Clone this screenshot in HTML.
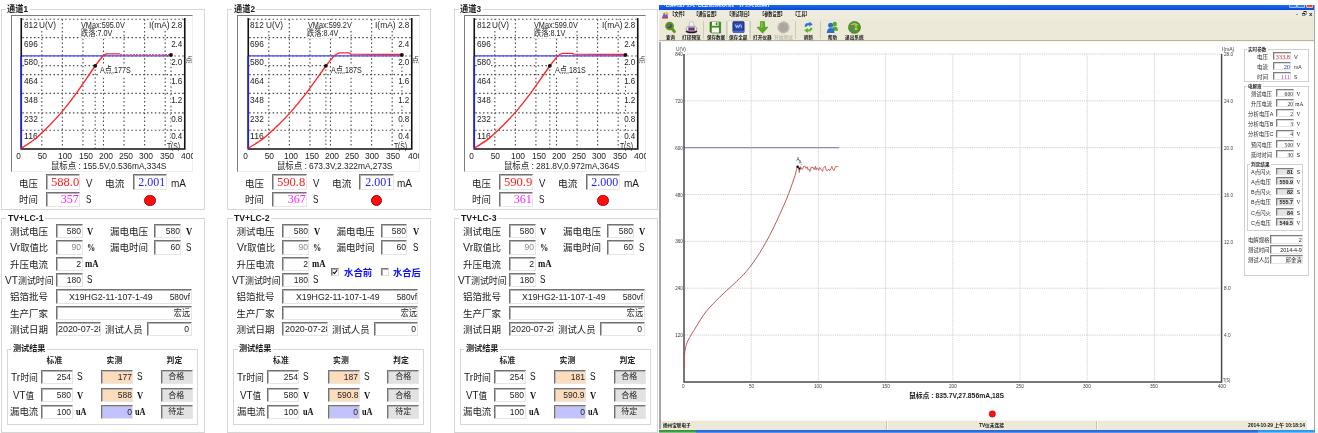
<!DOCTYPE html>
<html lang="zh-CN"><head><meta charset="utf-8"><title>TV+LC 测试</title>
<style>
html,body{margin:0;padding:0;background:#fff;}
body{width:1318px;height:433px;overflow:hidden;position:relative;font-family:'Liberation Sans','Noto Sans CJK SC',sans-serif;color:#1a1a1a;}
#root{position:absolute;left:0;top:0;width:1318px;height:433px;overflow:hidden;filter:blur(0.45px);}
#root div,#root svg{position:absolute;box-sizing:border-box;}
section{position:absolute;left:0;top:0;}
.t{white-space:nowrap;overflow:visible;}
.t span,.t b,.t label{display:inline-block;}
.inp{border:1px solid;border-color:#737373 #e6e6e6 #e6e6e6 #737373;box-shadow:inset 1px 1px 0 #b5b5b5;overflow:hidden;}
</style></head>
<body><div id="root">
<section id="ch1">
<div class="grp" style="left:0.7px;top:8.9px;width:204.2px;height:201.6px;border:1px solid #d6d6d6;"></div>
<div style="left:5.7px;top:3.9px;width:24px;height:11px;background:#fff;"></div>
<div class="t" style="top:2.7px;height:13px;line-height:13px;font-size:9.3px;left:7.2px;font-weight:bold;"><span style="transform:scaleX(0.884);transform-origin:0 50%;">通道1</span></div>
<div style="left:10.6px;top:15.2px;width:182.6px;height:157.2px;border:1.2px solid;border-color:#7c7c7c #eeeeee #eeeeee #7c7c7c;"></div>
<svg width="206" height="175" viewBox="0 0 206 175" style="left:0px;top:0;overflow:visible"><path d="M22.25,19.20H183.75 M22.25,37.60H183.75 M22.25,56.00H183.75 M22.25,74.60H183.75 M22.25,93.40H183.75 M22.25,112.90H183.75 M22.25,130.30H183.75 M41.81,19.20V148.40 M62.37,19.20V148.40 M82.93,19.20V148.40 M103.49,19.20V148.40 M124.05,19.20V148.40 M144.61,19.20V148.40 M165.17,19.20V148.40" stroke="#484848" stroke-width="1.1" stroke-dasharray="1.5 2.4" fill="none"/><path d="M22.25,65.60H95.20 M95.20,65.60V148.40 M171.00,55V148.40" stroke="#555" stroke-width="1.1" stroke-dasharray="1.5 2.4" fill="none"/></svg>
<div class="t" style="top:19.6px;height:9.8px;line-height:9.8px;font-size:9.6px;left:23.6px;color:#222;"><span style="background:#fff;transform:scaleX(0.862);transform-origin:0 50%;">812</span></div>
<div class="t" style="top:19.6px;height:9.8px;line-height:9.8px;font-size:9.6px;left:-57.6px;width:240px;text-align:right;color:#222;"><span style="background:#fff;transform:scaleX(0.839);transform-origin:100% 50%;">2.8</span></div>
<div class="t" style="top:38.7px;height:9.8px;line-height:9.8px;font-size:9.6px;left:23.6px;color:#222;"><span style="background:#fff;transform:scaleX(0.862);transform-origin:0 50%;">696</span></div>
<div class="t" style="top:38.7px;height:9.8px;line-height:9.8px;font-size:9.6px;left:-57.6px;width:240px;text-align:right;color:#222;"><span style="background:#fff;transform:scaleX(0.839);transform-origin:100% 50%;">2.4</span></div>
<div class="t" style="top:57.1px;height:9.8px;line-height:9.8px;font-size:9.6px;left:23.6px;color:#222;"><span style="background:#fff;transform:scaleX(0.862);transform-origin:0 50%;">580</span></div>
<div class="t" style="top:57.1px;height:9.8px;line-height:9.8px;font-size:9.6px;left:-57.6px;width:240px;text-align:right;color:#222;"><span style="background:#fff;transform:scaleX(0.839);transform-origin:100% 50%;">2.0</span></div>
<div class="t" style="top:75.7px;height:9.8px;line-height:9.8px;font-size:9.6px;left:23.6px;color:#222;"><span style="background:#fff;transform:scaleX(0.862);transform-origin:0 50%;">464</span></div>
<div class="t" style="top:75.7px;height:9.8px;line-height:9.8px;font-size:9.6px;left:-57.6px;width:240px;text-align:right;color:#222;"><span style="background:#fff;transform:scaleX(0.839);transform-origin:100% 50%;">1.6</span></div>
<div class="t" style="top:94.5px;height:9.8px;line-height:9.8px;font-size:9.6px;left:23.6px;color:#222;"><span style="background:#fff;transform:scaleX(0.862);transform-origin:0 50%;">348</span></div>
<div class="t" style="top:94.5px;height:9.8px;line-height:9.8px;font-size:9.6px;left:-57.6px;width:240px;text-align:right;color:#222;"><span style="background:#fff;transform:scaleX(0.839);transform-origin:100% 50%;">1.2</span></div>
<div class="t" style="top:114px;height:9.8px;line-height:9.8px;font-size:9.6px;left:23.6px;color:#222;"><span style="background:#fff;transform:scaleX(0.862);transform-origin:0 50%;">232</span></div>
<div class="t" style="top:114px;height:9.8px;line-height:9.8px;font-size:9.6px;left:-57.6px;width:240px;text-align:right;color:#222;"><span style="background:#fff;transform:scaleX(0.839);transform-origin:100% 50%;">0.8</span></div>
<div class="t" style="top:131.4px;height:9.8px;line-height:9.8px;font-size:9.6px;left:23.6px;color:#222;"><span style="background:#fff;transform:scaleX(0.902);transform-origin:0 50%;">116</span></div>
<div class="t" style="top:131.4px;height:9.8px;line-height:9.8px;font-size:9.6px;left:-57.6px;width:240px;text-align:right;color:#222;"><span style="background:#fff;transform:scaleX(0.839);transform-origin:100% 50%;">0.4</span></div>
<div class="t" style="top:19.6px;height:9.8px;line-height:9.8px;font-size:9.6px;left:39.4px;color:#222;"><span style="background:#fff;transform:scaleX(0.857);transform-origin:0 50%;">U(V)</span></div>
<div class="t" style="top:19.6px;height:9.8px;line-height:9.8px;font-size:9.6px;left:148.8px;color:#222;"><span style="background:#fff;transform:scaleX(0.878);transform-origin:0 50%;">I(mA)</span></div>
<div class="t" style="top:19.5px;height:9.8px;line-height:9.8px;font-size:9.6px;left:81.2px;color:#222;"><span style="background:#fff;transform:scaleX(0.760);transform-origin:0 50%;">VMax:595.0V</span></div>
<div class="t" style="top:28.8px;height:9.2px;line-height:9.2px;font-size:9px;left:80.6px;color:#222;"><span style="background:#fff;transform:scaleX(0.802);transform-origin:0 50%;">跌落:7.0V</span></div>
<div class="t" style="top:66.3px;height:9.2px;line-height:9.2px;font-size:9px;left:100.4px;color:#222;"><span style="background:#fff;transform:scaleX(0.797);transform-origin:0 50%;">A点,177S</span></div>
<div class="t" style="top:55.2px;height:10px;line-height:10px;font-size:7px;left:185.6px;color:#333;"><span style="">点</span></div>
<div class="t" style="top:142.2px;height:8.8px;line-height:8.8px;font-size:8.6px;left:167.3px;color:#222;"><span style="background:#fff;transform:scaleX(0.784);transform-origin:0 50%;">T(S)</span></div>
<svg width="206" height="175" viewBox="0 0 206 175" style="left:0px;top:0;overflow:visible"><path d="M21.25,55.8H171.50" stroke="#4545ff" stroke-width="1.35" fill="none"/><path d="M21.25,18V149.8 M184.75,18V149.8 M20.45,149H185.55" stroke="#111" stroke-width="1.6" fill="none"/><path d="M21.25,55.8V148.2" stroke="#2222dd" stroke-width="1.6" fill="none"/><path d="M21.3,148.2 C23.7,146.6 31.1,142.2 35.8,138.4 C40.5,134.6 45.2,129.7 49.6,125.2 C54.0,120.7 57.9,116.5 62.1,111.6 C66.3,106.7 69.1,103.3 74.6,95.7 C80.1,88.1 90.4,72.7 95.2,66.0 C100.0,59.3 101.9,57.4 103.2,55.7 L105.0,54.5 L106.9,53.8 H120.0" stroke="#ff2626" stroke-width="1.35" fill="none" stroke-linejoin="round"/><path d="M120.0,54.5 L171.0,54.7" stroke="#ff5050" stroke-width="1.2" stroke-dasharray="2.2 1" fill="none"/><circle cx="95.2" cy="65.8" r="1.9" fill="#111"/><circle cx="171.0" cy="54.9" r="1.9" fill="#111"/></svg>
<div class="t" style="top:149.1px;height:13px;line-height:13px;font-size:9.6px;left:-101.25px;width:240px;text-align:center;color:#222;"><span style="transform:scaleX(0.861);transform-origin:50% 50%;">0</span></div>
<div class="t" style="top:149.1px;height:13px;line-height:13px;font-size:9.6px;left:-77.5px;width:240px;text-align:center;color:#222;"><span style="transform:scaleX(0.881);transform-origin:50% 50%;">50</span></div>
<div class="t" style="top:149.1px;height:13px;line-height:13px;font-size:9.6px;left:-55px;width:240px;text-align:center;color:#222;"><span style="transform:scaleX(0.887);transform-origin:50% 50%;">100</span></div>
<div class="t" style="top:149.1px;height:13px;line-height:13px;font-size:9.6px;left:-34.4px;width:240px;text-align:center;color:#222;"><span style="transform:scaleX(0.887);transform-origin:50% 50%;">150</span></div>
<div class="t" style="top:149.1px;height:13px;line-height:13px;font-size:9.6px;left:-14px;width:240px;text-align:center;color:#222;"><span style="transform:scaleX(0.887);transform-origin:50% 50%;">200</span></div>
<div class="t" style="top:149.1px;height:13px;line-height:13px;font-size:9.6px;left:6px;width:240px;text-align:center;color:#222;"><span style="transform:scaleX(0.887);transform-origin:50% 50%;">250</span></div>
<div class="t" style="top:149.1px;height:13px;line-height:13px;font-size:9.6px;left:26px;width:240px;text-align:center;color:#222;"><span style="transform:scaleX(0.887);transform-origin:50% 50%;">300</span></div>
<div class="t" style="top:149.1px;height:13px;line-height:13px;font-size:9.6px;left:47px;width:240px;text-align:center;color:#222;"><span style="transform:scaleX(0.887);transform-origin:50% 50%;">350</span></div>
<div style="left:178px;top:150.5px;width:14.7px;height:12px;overflow:hidden;">
<div class="t" style="top:-1.4px;height:13px;line-height:13px;font-size:9.6px;left:3.2px;color:#222;"><span style="transform:scaleX(0.887);transform-origin:0 50%;">400</span></div>
</div>
<div class="t" style="top:160.1px;height:13px;line-height:13px;font-size:9.3px;left:50.6px;color:#222;"><span style="transform:scaleX(0.899);transform-origin:0 50%;">鼠标点 : 155.5V,0.536mA,334S</span></div>
<div class="t" style="top:177.1px;height:13px;line-height:13px;font-size:9.5px;left:18.7px;"><span style="transform:scaleX(0.989);transform-origin:0 50%;">电压</span></div>
<div class="inp" style="left:45.6px;top:174.4px;width:34.6px;height:15.4px;background:#fff;"></div>
<div class="t" style="top:174.1px;height:17px;line-height:17px;font-size:12.6px;left:-161px;width:240px;text-align:right;color:#ff1f1f;font-family:'Liberation Serif','Noto Serif CJK SC',serif;"><span style="transform:scaleX(1.002);transform-origin:100% 50%;">588.0</span></div>
<div class="t" style="top:176.6px;height:14px;line-height:14px;font-size:10.2px;left:86.2px;"><span style="transform:scaleX(0.942);transform-origin:0 50%;">V</span></div>
<div class="t" style="top:177.1px;height:13px;line-height:13px;font-size:9.5px;left:105px;"><span style="transform:scaleX(1.020);transform-origin:0 50%;">电流</span></div>
<div class="inp" style="left:132.5px;top:174.4px;width:34.7px;height:15.4px;background:#fff;"></div>
<div class="t" style="top:174.1px;height:17px;line-height:17px;font-size:12.6px;left:-74.2px;width:240px;text-align:right;color:#1f1fff;font-family:'Liberation Serif','Noto Serif CJK SC',serif;"><span style="transform:scaleX(0.953);transform-origin:100% 50%;">2.001</span></div>
<div class="t" style="top:176.6px;height:14px;line-height:14px;font-size:10.2px;left:170.6px;"><span style="transform:scaleX(0.982);transform-origin:0 50%;">mA</span></div>
<div class="t" style="top:193.3px;height:13px;line-height:13px;font-size:9.5px;left:18.7px;"><span style="transform:scaleX(0.989);transform-origin:0 50%;">时间</span></div>
<div class="inp" style="left:45.6px;top:192px;width:34.6px;height:14.6px;background:#fff;"></div>
<div class="t" style="top:190.9px;height:17px;line-height:17px;font-size:12.6px;left:-161.1px;width:240px;text-align:right;color:#ff22ff;font-family:'Liberation Serif','Noto Serif CJK SC',serif;"><span style="transform:scaleX(0.963);transform-origin:100% 50%;">357</span></div>
<div class="t" style="top:192.9px;height:14px;line-height:14px;font-size:10.2px;left:86px;"><span style="transform:scaleX(0.794);transform-origin:0 50%;">S</span></div>
<div style="left:144.1px;top:194.7px;width:11.8px;height:11.8px;border-radius:50%;background:#ff0d0d;border:0.8px solid #b30000;"></div>
<div class="grp" style="left:0.7px;top:217.5px;width:204.2px;height:215.4px;border:1px solid #d6d6d6;"></div>
<div style="left:6px;top:212.5px;width:38.5px;height:11px;background:#fff;"></div>
<div class="t" style="top:211.8px;height:12px;line-height:12px;font-size:8.6px;left:7.5px;font-weight:bold;"><span style="transform:scaleX(1.011);transform-origin:0 50%;">TV+LC-1</span></div>
<div class="t" style="top:224.8px;height:13px;line-height:13px;font-size:9.5px;left:10px;"><span style="transform:scaleX(1.000);transform-origin:0 50%;">测试电压</span></div>
<div class="inp" style="left:55.9px;top:223.8px;width:26.7px;height:14.4px;background:#fff;"></div>
<div class="t" style="top:225px;height:13px;line-height:13px;font-size:9px;left:-158.6px;width:240px;text-align:right;color:#222;"><span style="transform:scaleX(0.945);transform-origin:100% 50%;">580</span></div>
<div class="t" style="top:224.5px;height:14px;line-height:14px;font-size:10.2px;left:87px;color:#111;font-weight:bold;font-family:'Liberation Serif','Noto Serif CJK SC',serif;"><span style="transform:scaleX(0.842);transform-origin:0 50%;">V</span></div>
<div class="t" style="top:224.8px;height:13px;line-height:13px;font-size:9.5px;left:110px;"><span style="transform:scaleX(1.000);transform-origin:0 50%;">漏电电压</span></div>
<div class="inp" style="left:154.4px;top:223.8px;width:26.4px;height:14.4px;background:#fff;"></div>
<div class="t" style="top:225px;height:13px;line-height:13px;font-size:9px;left:-60.4px;width:240px;text-align:right;color:#222;"><span style="transform:scaleX(0.945);transform-origin:100% 50%;">580</span></div>
<div class="t" style="top:224.5px;height:14px;line-height:14px;font-size:10.2px;left:186.2px;color:#111;font-weight:bold;font-family:'Liberation Serif','Noto Serif CJK SC',serif;"><span style="transform:scaleX(0.842);transform-origin:0 50%;">V</span></div>
<div class="t" style="top:241.2px;height:13px;line-height:13px;font-size:9.5px;left:10px;"><span style="transform:scaleX(0.976);transform-origin:0 50%;"><span style="font-size:114%">Vr</span>取值比</span></div>
<div class="inp" style="left:55.9px;top:240.2px;width:26.7px;height:14.4px;background:#fff;"></div>
<div class="t" style="top:241.4px;height:13px;line-height:13px;font-size:9px;left:-158.6px;width:240px;text-align:right;color:#8c8c8c;"><span style="transform:scaleX(0.959);transform-origin:100% 50%;">90</span></div>
<div class="t" style="top:240.9px;height:14px;line-height:14px;font-size:10.2px;left:86.8px;color:#111;font-weight:bold;font-family:'Liberation Serif','Noto Serif CJK SC',serif;"><span style="transform:scaleX(0.805);transform-origin:0 50%;">%</span></div>
<div class="t" style="top:241.2px;height:13px;line-height:13px;font-size:9.5px;left:110px;"><span style="transform:scaleX(1.000);transform-origin:0 50%;">漏电时间</span></div>
<div class="inp" style="left:154.4px;top:240.2px;width:26.4px;height:14.4px;background:#fff;"></div>
<div class="t" style="top:241.4px;height:13px;line-height:13px;font-size:9px;left:-60.4px;width:240px;text-align:right;color:#222;"><span style="transform:scaleX(0.959);transform-origin:100% 50%;">60</span></div>
<div class="t" style="top:240.9px;height:14px;line-height:14px;font-size:10px;left:186.4px;color:#111;"><span style="transform:scaleX(0.809);transform-origin:0 50%;">S</span></div>
<div class="t" style="top:257.7px;height:13px;line-height:13px;font-size:9.5px;left:10px;"><span style="transform:scaleX(1.000);transform-origin:0 50%;">升压电流</span></div>
<div class="inp" style="left:55.9px;top:256.7px;width:26.7px;height:14.4px;background:#fff;"></div>
<div class="t" style="top:257.9px;height:13px;line-height:13px;font-size:9px;left:-158.6px;width:240px;text-align:right;color:#222;"><span style="transform:scaleX(0.957);transform-origin:100% 50%;">2</span></div>
<div class="t" style="top:257.4px;height:14px;line-height:14px;font-size:10.2px;left:85px;color:#111;font-weight:bold;font-family:'Liberation Serif','Noto Serif CJK SC',serif;"><span style="transform:scaleX(0.858);transform-origin:0 50%;">mA</span></div>
<div class="t" style="top:273.7px;height:13px;line-height:13px;font-size:9.5px;left:5px;"><span style="transform:scaleX(0.939);transform-origin:0 50%;"><span style="font-size:114%">VT</span>测试时间</span></div>
<div class="inp" style="left:55.9px;top:272.7px;width:26.7px;height:14.4px;background:#fff;"></div>
<div class="t" style="top:273.9px;height:13px;line-height:13px;font-size:9px;left:-158.6px;width:240px;text-align:right;color:#222;"><span style="transform:scaleX(0.945);transform-origin:100% 50%;">180</span></div>
<div class="t" style="top:273.4px;height:14px;line-height:14px;font-size:10px;left:86.6px;color:#111;"><span style="transform:scaleX(0.809);transform-origin:0 50%;">S</span></div>
<div class="t" style="top:290.3px;height:13px;line-height:13px;font-size:9.5px;left:10px;"><span style="transform:scaleX(1.000);transform-origin:0 50%;">铝箔批号</span></div>
<div class="inp" style="left:55.9px;top:289.3px;width:135.9px;height:14.4px;background:#fff;"></div>
<div class="t" style="top:290.5px;height:13px;line-height:13px;font-size:9px;left:69.4px;color:#222;"><span style="transform:scaleX(0.973);transform-origin:0 50%;">X19HG2-11-107-1-49</span></div>
<div class="t" style="top:290.5px;height:13px;line-height:13px;font-size:9px;left:-49.6px;width:240px;text-align:right;color:#222;"><span style="transform:scaleX(0.926);transform-origin:100% 50%;">580vf</span></div>
<div class="t" style="top:306.5px;height:13px;line-height:13px;font-size:9.5px;left:10px;"><span style="transform:scaleX(1.000);transform-origin:0 50%;">生产厂家</span></div>
<div class="inp" style="left:55.9px;top:305.5px;width:135.9px;height:14.4px;background:#fff;"></div>
<div class="t" style="top:306.7px;height:13px;line-height:13px;font-size:9px;left:-49.6px;width:240px;text-align:right;color:#222;"><span style="transform:scaleX(0.899);transform-origin:100% 50%;">宏远</span></div>
<div class="t" style="top:322.8px;height:13px;line-height:13px;font-size:9.5px;left:10px;"><span style="transform:scaleX(1.000);transform-origin:0 50%;">测试日期</span></div>
<div class="inp" style="left:55.9px;top:321.8px;width:45.2px;height:14.4px;background:#fff;">
<div class="t" style="top:0px;height:13px;line-height:13px;font-size:9px;left:1.6px;color:#222;"><span style="transform:scaleX(0.990);transform-origin:0 50%;">2020-07-28</span></div>
</div>
<div class="t" style="top:322.8px;height:13px;line-height:13px;font-size:9.5px;left:105px;"><span style="transform:scaleX(0.989);transform-origin:0 50%;">测试人员</span></div>
<div class="inp" style="left:147px;top:321.8px;width:44.8px;height:14.4px;background:#fff;"></div>
<div class="t" style="top:323px;height:13px;line-height:13px;font-size:9px;left:-50.8px;width:240px;text-align:right;color:#222;"><span style="transform:scaleX(0.957);transform-origin:100% 50%;">0</span></div>
<div class="grp" style="left:6.6px;top:348.8px;width:191.4px;height:76.6px;border:1px solid #d6d6d6;"></div>
<div style="left:11px;top:343.8px;width:35.5px;height:11px;background:#fff;"></div>
<div class="t" style="top:343.1px;height:12px;line-height:12px;font-size:8.2px;left:12.5px;font-weight:bold;"><span style="transform:scaleX(0.992);transform-origin:0 50%;">测试结果</span></div>
<div class="t" style="top:355.1px;height:11px;line-height:11px;font-size:7.8px;left:-65.6px;width:240px;text-align:center;color:#222;font-weight:bold;"><span style="transform:scaleX(1.000);transform-origin:50% 50%;">标准</span></div>
<div class="t" style="top:355.1px;height:11px;line-height:11px;font-size:7.8px;left:-5.6px;width:240px;text-align:center;color:#222;font-weight:bold;"><span style="transform:scaleX(1.000);transform-origin:50% 50%;">实测</span></div>
<div class="t" style="top:355.1px;height:11px;line-height:11px;font-size:7.8px;left:54.4px;width:240px;text-align:center;color:#222;font-weight:bold;"><span style="transform:scaleX(1.000);transform-origin:50% 50%;">判定</span></div>
<div class="t" style="top:370.7px;height:13px;line-height:13px;font-size:9.5px;left:10.6px;"><span style="transform:scaleX(0.933);transform-origin:0 50%;"><span style="font-size:114%">Tr</span>时间</span></div>
<div class="inp" style="left:40.6px;top:369.5px;width:32.1px;height:14.7px;background:#fff;"></div>
<div class="t" style="top:370.9px;height:13px;line-height:13px;font-size:9px;left:-168.6px;width:240px;text-align:right;color:#222;"><span style="transform:scaleX(0.945);transform-origin:100% 50%;">254</span></div>
<div class="t" style="top:370.4px;height:14px;line-height:14px;font-size:10px;left:76.8px;color:#111;"><span style="transform:scaleX(0.839);transform-origin:0 50%;">S</span></div>
<div class="inp" style="left:101px;top:369.5px;width:32px;height:14.7px;background:#fddcbc;"></div>
<div class="t" style="top:370.9px;height:13px;line-height:13px;font-size:9px;left:-108.4px;width:240px;text-align:right;color:#222;"><span style="transform:scaleX(0.948);transform-origin:100% 50%;">177</span></div>
<div class="t" style="top:370.4px;height:14px;line-height:14px;font-size:10px;left:137.2px;color:#111;"><span style="transform:scaleX(0.839);transform-origin:0 50%;">S</span></div>
<div class="inp" style="left:160.5px;top:369.5px;width:32.3px;height:14.7px;background:#e2e2e2;"></div>
<div class="t" style="top:371.3px;height:12px;line-height:12px;font-size:8.2px;left:56.6px;width:240px;text-align:center;color:#222;"><span style="transform:scaleX(0.976);transform-origin:50% 50%;">合格</span></div>
<div class="t" style="top:389.1px;height:13px;line-height:13px;font-size:9.5px;left:13px;"><span style="transform:scaleX(0.899);transform-origin:0 50%;"><span style="font-size:114%">VT</span>值</span></div>
<div class="inp" style="left:40.6px;top:387.8px;width:32.1px;height:14.6px;background:#fff;"></div>
<div class="t" style="top:389.3px;height:13px;line-height:13px;font-size:9px;left:-168.6px;width:240px;text-align:right;color:#222;"><span style="transform:scaleX(0.945);transform-origin:100% 50%;">580</span></div>
<div class="t" style="top:388.8px;height:14px;line-height:14px;font-size:10.2px;left:76.6px;color:#111;font-weight:bold;font-family:'Liberation Serif','Noto Serif CJK SC',serif;"><span style="transform:scaleX(0.842);transform-origin:0 50%;">V</span></div>
<div class="inp" style="left:101px;top:387.8px;width:32px;height:14.6px;background:#fddcbc;"></div>
<div class="t" style="top:389.3px;height:13px;line-height:13px;font-size:9px;left:-108.4px;width:240px;text-align:right;color:#222;"><span style="transform:scaleX(0.948);transform-origin:100% 50%;">588</span></div>
<div class="t" style="top:388.8px;height:14px;line-height:14px;font-size:10.2px;left:137px;color:#111;font-weight:bold;font-family:'Liberation Serif','Noto Serif CJK SC',serif;"><span style="transform:scaleX(0.842);transform-origin:0 50%;">V</span></div>
<div class="inp" style="left:160.5px;top:387.8px;width:32.3px;height:14.6px;background:#e2e2e2;"></div>
<div class="t" style="top:389.7px;height:12px;line-height:12px;font-size:8.2px;left:56.6px;width:240px;text-align:center;color:#222;"><span style="transform:scaleX(0.976);transform-origin:50% 50%;">合格</span></div>
<div class="t" style="top:405.4px;height:13px;line-height:13px;font-size:9.5px;left:10px;"><span style="transform:scaleX(0.989);transform-origin:0 50%;">漏电流</span></div>
<div class="inp" style="left:40.6px;top:404.6px;width:32.1px;height:14.6px;background:#fff;"></div>
<div class="t" style="top:405.6px;height:13px;line-height:13px;font-size:9px;left:-168.6px;width:240px;text-align:right;color:#222;"><span style="transform:scaleX(0.945);transform-origin:100% 50%;">100</span></div>
<div class="t" style="top:405.1px;height:14px;line-height:14px;font-size:10.2px;left:76px;color:#111;font-weight:bold;font-family:'Liberation Serif','Noto Serif CJK SC',serif;"><span style="transform:scaleX(0.813);transform-origin:0 50%;">uA</span></div>
<div class="inp" style="left:101px;top:404.6px;width:32px;height:14.6px;background:#c2c2ff;"></div>
<div class="t" style="top:405.6px;height:13px;line-height:13px;font-size:9px;left:-108.4px;width:240px;text-align:right;color:#222;"><span style="transform:scaleX(0.947);transform-origin:100% 50%;">0</span></div>
<div class="t" style="top:405.1px;height:14px;line-height:14px;font-size:10.2px;left:135.4px;color:#111;font-weight:bold;font-family:'Liberation Serif','Noto Serif CJK SC',serif;"><span style="transform:scaleX(0.813);transform-origin:0 50%;">uA</span></div>
<div class="inp" style="left:160.5px;top:404.6px;width:32.3px;height:14.6px;background:#e2e2e2;"></div>
<div class="t" style="top:406px;height:12px;line-height:12px;font-size:8.2px;left:56.6px;width:240px;text-align:center;color:#222;"><span style="transform:scaleX(0.976);transform-origin:50% 50%;">待定</span></div>
</section>
<section id="ch2">
<div class="grp" style="left:227.2px;top:8.9px;width:204.2px;height:201.6px;border:1px solid #d6d6d6;"></div>
<div style="left:232.2px;top:3.9px;width:24px;height:11px;background:#fff;"></div>
<div class="t" style="top:2.7px;height:13px;line-height:13px;font-size:9.3px;left:233.7px;font-weight:bold;"><span style="transform:scaleX(0.884);transform-origin:0 50%;">通道2</span></div>
<div style="left:237.1px;top:15.2px;width:182.6px;height:157.2px;border:1.2px solid;border-color:#7c7c7c #eeeeee #eeeeee #7c7c7c;"></div>
<svg width="206" height="175" viewBox="0 0 206 175" style="left:226.5px;top:0;overflow:visible"><path d="M22.25,19.20H183.75 M22.25,37.60H183.75 M22.25,56.00H183.75 M22.25,74.60H183.75 M22.25,93.40H183.75 M22.25,112.90H183.75 M22.25,130.30H183.75 M41.81,19.20V148.40 M62.37,19.20V148.40 M82.93,19.20V148.40 M103.49,19.20V148.40 M124.05,19.20V148.40 M144.61,19.20V148.40 M165.17,19.20V148.40" stroke="#484848" stroke-width="1.1" stroke-dasharray="1.5 2.4" fill="none"/><path d="M22.25,65.60H98.90 M98.90,65.60V148.40 M174.90,55V148.40" stroke="#555" stroke-width="1.1" stroke-dasharray="1.5 2.4" fill="none"/></svg>
<div class="t" style="top:19.6px;height:9.8px;line-height:9.8px;font-size:9.6px;left:250.1px;color:#222;"><span style="background:#fff;transform:scaleX(0.862);transform-origin:0 50%;">812</span></div>
<div class="t" style="top:19.6px;height:9.8px;line-height:9.8px;font-size:9.6px;left:168.9px;width:240px;text-align:right;color:#222;"><span style="background:#fff;transform:scaleX(0.839);transform-origin:100% 50%;">2.8</span></div>
<div class="t" style="top:38.7px;height:9.8px;line-height:9.8px;font-size:9.6px;left:250.1px;color:#222;"><span style="background:#fff;transform:scaleX(0.862);transform-origin:0 50%;">696</span></div>
<div class="t" style="top:38.7px;height:9.8px;line-height:9.8px;font-size:9.6px;left:168.9px;width:240px;text-align:right;color:#222;"><span style="background:#fff;transform:scaleX(0.839);transform-origin:100% 50%;">2.4</span></div>
<div class="t" style="top:57.1px;height:9.8px;line-height:9.8px;font-size:9.6px;left:250.1px;color:#222;"><span style="background:#fff;transform:scaleX(0.862);transform-origin:0 50%;">580</span></div>
<div class="t" style="top:57.1px;height:9.8px;line-height:9.8px;font-size:9.6px;left:168.9px;width:240px;text-align:right;color:#222;"><span style="background:#fff;transform:scaleX(0.839);transform-origin:100% 50%;">2.0</span></div>
<div class="t" style="top:75.7px;height:9.8px;line-height:9.8px;font-size:9.6px;left:250.1px;color:#222;"><span style="background:#fff;transform:scaleX(0.862);transform-origin:0 50%;">464</span></div>
<div class="t" style="top:75.7px;height:9.8px;line-height:9.8px;font-size:9.6px;left:168.9px;width:240px;text-align:right;color:#222;"><span style="background:#fff;transform:scaleX(0.839);transform-origin:100% 50%;">1.6</span></div>
<div class="t" style="top:94.5px;height:9.8px;line-height:9.8px;font-size:9.6px;left:250.1px;color:#222;"><span style="background:#fff;transform:scaleX(0.862);transform-origin:0 50%;">348</span></div>
<div class="t" style="top:94.5px;height:9.8px;line-height:9.8px;font-size:9.6px;left:168.9px;width:240px;text-align:right;color:#222;"><span style="background:#fff;transform:scaleX(0.839);transform-origin:100% 50%;">1.2</span></div>
<div class="t" style="top:114px;height:9.8px;line-height:9.8px;font-size:9.6px;left:250.1px;color:#222;"><span style="background:#fff;transform:scaleX(0.862);transform-origin:0 50%;">232</span></div>
<div class="t" style="top:114px;height:9.8px;line-height:9.8px;font-size:9.6px;left:168.9px;width:240px;text-align:right;color:#222;"><span style="background:#fff;transform:scaleX(0.839);transform-origin:100% 50%;">0.8</span></div>
<div class="t" style="top:131.4px;height:9.8px;line-height:9.8px;font-size:9.6px;left:250.1px;color:#222;"><span style="background:#fff;transform:scaleX(0.902);transform-origin:0 50%;">116</span></div>
<div class="t" style="top:131.4px;height:9.8px;line-height:9.8px;font-size:9.6px;left:168.9px;width:240px;text-align:right;color:#222;"><span style="background:#fff;transform:scaleX(0.839);transform-origin:100% 50%;">0.4</span></div>
<div class="t" style="top:19.6px;height:9.8px;line-height:9.8px;font-size:9.6px;left:265.9px;color:#222;"><span style="background:#fff;transform:scaleX(0.857);transform-origin:0 50%;">U(V)</span></div>
<div class="t" style="top:19.6px;height:9.8px;line-height:9.8px;font-size:9.6px;left:375.3px;color:#222;"><span style="background:#fff;transform:scaleX(0.878);transform-origin:0 50%;">I(mA)</span></div>
<div class="t" style="top:19.5px;height:9.8px;line-height:9.8px;font-size:9.6px;left:307.7px;color:#222;"><span style="background:#fff;transform:scaleX(0.760);transform-origin:0 50%;">VMax:599.2V</span></div>
<div class="t" style="top:28.8px;height:9.2px;line-height:9.2px;font-size:9px;left:307.1px;color:#222;"><span style="background:#fff;transform:scaleX(0.802);transform-origin:0 50%;">跌落:8.4V</span></div>
<div class="t" style="top:66.3px;height:9.2px;line-height:9.2px;font-size:9px;left:330.6px;color:#222;"><span style="background:#fff;transform:scaleX(0.797);transform-origin:0 50%;">A点,187S</span></div>
<div class="t" style="top:55.2px;height:10px;line-height:10px;font-size:7px;left:412.1px;color:#333;"><span style="">点</span></div>
<div class="t" style="top:142.2px;height:8.8px;line-height:8.8px;font-size:8.6px;left:393.8px;color:#222;"><span style="background:#fff;transform:scaleX(0.784);transform-origin:0 50%;">T(S)</span></div>
<svg width="206" height="175" viewBox="0 0 206 175" style="left:226.5px;top:0;overflow:visible"><path d="M21.25,55.8H175.40" stroke="#4545ff" stroke-width="1.35" fill="none"/><path d="M21.25,18V149.8 M184.75,18V149.8 M20.45,149H185.55" stroke="#111" stroke-width="1.6" fill="none"/><path d="M21.25,55.8V148.2" stroke="#2222dd" stroke-width="1.6" fill="none"/><path d="M21.3,148.2 C23.8,146.6 31.6,142.2 36.5,138.4 C41.5,134.6 46.4,129.7 51.0,125.2 C55.6,120.7 59.8,116.5 64.1,111.6 C68.5,106.7 71.5,103.3 77.3,95.7 C83.1,88.1 93.9,72.7 98.9,66.0 C103.9,59.3 105.9,57.4 107.3,55.7 L109.1,54.5 L112.2,52.9 H122.4 L124.0,54.2 L174.9,54.5" stroke="#ff2626" stroke-width="1.35" fill="none" stroke-linejoin="round"/><circle cx="98.9" cy="65.8" r="1.9" fill="#111"/><circle cx="174.9" cy="54.9" r="1.9" fill="#111"/></svg>
<div class="t" style="top:149.1px;height:13px;line-height:13px;font-size:9.6px;left:125.25px;width:240px;text-align:center;color:#222;"><span style="transform:scaleX(0.861);transform-origin:50% 50%;">0</span></div>
<div class="t" style="top:149.1px;height:13px;line-height:13px;font-size:9.6px;left:149px;width:240px;text-align:center;color:#222;"><span style="transform:scaleX(0.881);transform-origin:50% 50%;">50</span></div>
<div class="t" style="top:149.1px;height:13px;line-height:13px;font-size:9.6px;left:171.5px;width:240px;text-align:center;color:#222;"><span style="transform:scaleX(0.887);transform-origin:50% 50%;">100</span></div>
<div class="t" style="top:149.1px;height:13px;line-height:13px;font-size:9.6px;left:192.1px;width:240px;text-align:center;color:#222;"><span style="transform:scaleX(0.887);transform-origin:50% 50%;">150</span></div>
<div class="t" style="top:149.1px;height:13px;line-height:13px;font-size:9.6px;left:212.5px;width:240px;text-align:center;color:#222;"><span style="transform:scaleX(0.887);transform-origin:50% 50%;">200</span></div>
<div class="t" style="top:149.1px;height:13px;line-height:13px;font-size:9.6px;left:232.5px;width:240px;text-align:center;color:#222;"><span style="transform:scaleX(0.887);transform-origin:50% 50%;">250</span></div>
<div class="t" style="top:149.1px;height:13px;line-height:13px;font-size:9.6px;left:252.5px;width:240px;text-align:center;color:#222;"><span style="transform:scaleX(0.887);transform-origin:50% 50%;">300</span></div>
<div class="t" style="top:149.1px;height:13px;line-height:13px;font-size:9.6px;left:273.5px;width:240px;text-align:center;color:#222;"><span style="transform:scaleX(0.887);transform-origin:50% 50%;">350</span></div>
<div style="left:404.5px;top:150.5px;width:14.7px;height:12px;overflow:hidden;">
<div class="t" style="top:-1.4px;height:13px;line-height:13px;font-size:9.6px;left:3.2px;color:#222;"><span style="transform:scaleX(0.887);transform-origin:0 50%;">400</span></div>
</div>
<div class="t" style="top:160.1px;height:13px;line-height:13px;font-size:9.3px;left:277.1px;color:#222;"><span style="transform:scaleX(0.899);transform-origin:0 50%;">鼠标点 : 673.3V,2.322mA,273S</span></div>
<div class="t" style="top:177.1px;height:13px;line-height:13px;font-size:9.5px;left:245.2px;"><span style="transform:scaleX(0.989);transform-origin:0 50%;">电压</span></div>
<div class="inp" style="left:272.1px;top:174.4px;width:34.6px;height:15.4px;background:#fff;"></div>
<div class="t" style="top:174.1px;height:17px;line-height:17px;font-size:12.6px;left:65.5px;width:240px;text-align:right;color:#ff1f1f;font-family:'Liberation Serif','Noto Serif CJK SC',serif;"><span style="transform:scaleX(1.002);transform-origin:100% 50%;">590.8</span></div>
<div class="t" style="top:176.6px;height:14px;line-height:14px;font-size:10.2px;left:312.7px;"><span style="transform:scaleX(0.942);transform-origin:0 50%;">V</span></div>
<div class="t" style="top:177.1px;height:13px;line-height:13px;font-size:9.5px;left:331.5px;"><span style="transform:scaleX(1.020);transform-origin:0 50%;">电流</span></div>
<div class="inp" style="left:359px;top:174.4px;width:34.7px;height:15.4px;background:#fff;"></div>
<div class="t" style="top:174.1px;height:17px;line-height:17px;font-size:12.6px;left:152.3px;width:240px;text-align:right;color:#1f1fff;font-family:'Liberation Serif','Noto Serif CJK SC',serif;"><span style="transform:scaleX(0.953);transform-origin:100% 50%;">2.001</span></div>
<div class="t" style="top:176.6px;height:14px;line-height:14px;font-size:10.2px;left:397.1px;"><span style="transform:scaleX(0.982);transform-origin:0 50%;">mA</span></div>
<div class="t" style="top:193.3px;height:13px;line-height:13px;font-size:9.5px;left:245.2px;"><span style="transform:scaleX(0.989);transform-origin:0 50%;">时间</span></div>
<div class="inp" style="left:272.1px;top:192px;width:34.6px;height:14.6px;background:#fff;"></div>
<div class="t" style="top:190.9px;height:17px;line-height:17px;font-size:12.6px;left:65.4px;width:240px;text-align:right;color:#ff22ff;font-family:'Liberation Serif','Noto Serif CJK SC',serif;"><span style="transform:scaleX(0.963);transform-origin:100% 50%;">367</span></div>
<div class="t" style="top:192.9px;height:14px;line-height:14px;font-size:10.2px;left:312.5px;"><span style="transform:scaleX(0.794);transform-origin:0 50%;">S</span></div>
<div style="left:370.6px;top:194.7px;width:11.8px;height:11.8px;border-radius:50%;background:#ff0d0d;border:0.8px solid #b30000;"></div>
<div class="grp" style="left:227.2px;top:217.5px;width:204.2px;height:215.4px;border:1px solid #d6d6d6;"></div>
<div style="left:232.5px;top:212.5px;width:38.5px;height:11px;background:#fff;"></div>
<div class="t" style="top:211.8px;height:12px;line-height:12px;font-size:8.6px;left:234px;font-weight:bold;"><span style="transform:scaleX(1.011);transform-origin:0 50%;">TV+LC-2</span></div>
<div class="t" style="top:224.8px;height:13px;line-height:13px;font-size:9.5px;left:236.5px;"><span style="transform:scaleX(1.000);transform-origin:0 50%;">测试电压</span></div>
<div class="inp" style="left:282.4px;top:223.8px;width:26.7px;height:14.4px;background:#fff;"></div>
<div class="t" style="top:225px;height:13px;line-height:13px;font-size:9px;left:67.9px;width:240px;text-align:right;color:#222;"><span style="transform:scaleX(0.945);transform-origin:100% 50%;">580</span></div>
<div class="t" style="top:224.5px;height:14px;line-height:14px;font-size:10.2px;left:313.5px;color:#111;font-weight:bold;font-family:'Liberation Serif','Noto Serif CJK SC',serif;"><span style="transform:scaleX(0.842);transform-origin:0 50%;">V</span></div>
<div class="t" style="top:224.8px;height:13px;line-height:13px;font-size:9.5px;left:336.5px;"><span style="transform:scaleX(1.000);transform-origin:0 50%;">漏电电压</span></div>
<div class="inp" style="left:380.9px;top:223.8px;width:26.4px;height:14.4px;background:#fff;"></div>
<div class="t" style="top:225px;height:13px;line-height:13px;font-size:9px;left:166.1px;width:240px;text-align:right;color:#222;"><span style="transform:scaleX(0.945);transform-origin:100% 50%;">580</span></div>
<div class="t" style="top:224.5px;height:14px;line-height:14px;font-size:10.2px;left:412.7px;color:#111;font-weight:bold;font-family:'Liberation Serif','Noto Serif CJK SC',serif;"><span style="transform:scaleX(0.842);transform-origin:0 50%;">V</span></div>
<div class="t" style="top:241.2px;height:13px;line-height:13px;font-size:9.5px;left:236.5px;"><span style="transform:scaleX(0.976);transform-origin:0 50%;"><span style="font-size:114%">Vr</span>取值比</span></div>
<div class="inp" style="left:282.4px;top:240.2px;width:26.7px;height:14.4px;background:#fff;"></div>
<div class="t" style="top:241.4px;height:13px;line-height:13px;font-size:9px;left:67.9px;width:240px;text-align:right;color:#8c8c8c;"><span style="transform:scaleX(0.959);transform-origin:100% 50%;">90</span></div>
<div class="t" style="top:240.9px;height:14px;line-height:14px;font-size:10.2px;left:313.3px;color:#111;font-weight:bold;font-family:'Liberation Serif','Noto Serif CJK SC',serif;"><span style="transform:scaleX(0.805);transform-origin:0 50%;">%</span></div>
<div class="t" style="top:241.2px;height:13px;line-height:13px;font-size:9.5px;left:336.5px;"><span style="transform:scaleX(1.000);transform-origin:0 50%;">漏电时间</span></div>
<div class="inp" style="left:380.9px;top:240.2px;width:26.4px;height:14.4px;background:#fff;"></div>
<div class="t" style="top:241.4px;height:13px;line-height:13px;font-size:9px;left:166.1px;width:240px;text-align:right;color:#222;"><span style="transform:scaleX(0.959);transform-origin:100% 50%;">60</span></div>
<div class="t" style="top:240.9px;height:14px;line-height:14px;font-size:10px;left:412.9px;color:#111;"><span style="transform:scaleX(0.809);transform-origin:0 50%;">S</span></div>
<div class="t" style="top:257.7px;height:13px;line-height:13px;font-size:9.5px;left:236.5px;"><span style="transform:scaleX(1.000);transform-origin:0 50%;">升压电流</span></div>
<div class="inp" style="left:282.4px;top:256.7px;width:26.7px;height:14.4px;background:#fff;"></div>
<div class="t" style="top:257.9px;height:13px;line-height:13px;font-size:9px;left:67.9px;width:240px;text-align:right;color:#222;"><span style="transform:scaleX(0.957);transform-origin:100% 50%;">2</span></div>
<div class="t" style="top:257.4px;height:14px;line-height:14px;font-size:10.2px;left:311.5px;color:#111;font-weight:bold;font-family:'Liberation Serif','Noto Serif CJK SC',serif;"><span style="transform:scaleX(0.858);transform-origin:0 50%;">mA</span></div>
<div class="t" style="top:273.7px;height:13px;line-height:13px;font-size:9.5px;left:231.5px;"><span style="transform:scaleX(0.939);transform-origin:0 50%;"><span style="font-size:114%">VT</span>测试时间</span></div>
<div class="inp" style="left:282.4px;top:272.7px;width:26.7px;height:14.4px;background:#fff;"></div>
<div class="t" style="top:273.9px;height:13px;line-height:13px;font-size:9px;left:67.9px;width:240px;text-align:right;color:#222;"><span style="transform:scaleX(0.945);transform-origin:100% 50%;">180</span></div>
<div class="t" style="top:273.4px;height:14px;line-height:14px;font-size:10px;left:313.1px;color:#111;"><span style="transform:scaleX(0.809);transform-origin:0 50%;">S</span></div>
<div class="t" style="top:290.3px;height:13px;line-height:13px;font-size:9.5px;left:236.5px;"><span style="transform:scaleX(1.000);transform-origin:0 50%;">铝箔批号</span></div>
<div class="inp" style="left:282.4px;top:289.3px;width:135.9px;height:14.4px;background:#fff;"></div>
<div class="t" style="top:290.5px;height:13px;line-height:13px;font-size:9px;left:295.9px;color:#222;"><span style="transform:scaleX(0.973);transform-origin:0 50%;">X19HG2-11-107-1-49</span></div>
<div class="t" style="top:290.5px;height:13px;line-height:13px;font-size:9px;left:176.9px;width:240px;text-align:right;color:#222;"><span style="transform:scaleX(0.926);transform-origin:100% 50%;">580vf</span></div>
<div class="t" style="top:306.5px;height:13px;line-height:13px;font-size:9.5px;left:236.5px;"><span style="transform:scaleX(1.000);transform-origin:0 50%;">生产厂家</span></div>
<div class="inp" style="left:282.4px;top:305.5px;width:135.9px;height:14.4px;background:#fff;"></div>
<div class="t" style="top:306.7px;height:13px;line-height:13px;font-size:9px;left:176.9px;width:240px;text-align:right;color:#222;"><span style="transform:scaleX(0.899);transform-origin:100% 50%;">宏远</span></div>
<div class="t" style="top:322.8px;height:13px;line-height:13px;font-size:9.5px;left:236.5px;"><span style="transform:scaleX(1.000);transform-origin:0 50%;">测试日期</span></div>
<div class="inp" style="left:282.4px;top:321.8px;width:45.2px;height:14.4px;background:#fff;">
<div class="t" style="top:0px;height:13px;line-height:13px;font-size:9px;left:1.6px;color:#222;"><span style="transform:scaleX(0.990);transform-origin:0 50%;">2020-07-28</span></div>
</div>
<div class="t" style="top:322.8px;height:13px;line-height:13px;font-size:9.5px;left:331.5px;"><span style="transform:scaleX(0.989);transform-origin:0 50%;">测试人员</span></div>
<div class="inp" style="left:373.5px;top:321.8px;width:44.8px;height:14.4px;background:#fff;"></div>
<div class="t" style="top:323px;height:13px;line-height:13px;font-size:9px;left:175.7px;width:240px;text-align:right;color:#222;"><span style="transform:scaleX(0.957);transform-origin:100% 50%;">0</span></div>
<div style="left:330.9px;top:268.3px;width:8px;height:8px;background:#fff;border:1px solid;border-color:#7a7a7a #dcdcdc #dcdcdc #7a7a7a;box-shadow:inset 1px 1px 0 #b0b0b0;"></div>
<svg width="8" height="8" viewBox="0 0 8 8" style="left:330.9px;top:268.3px"><path d="M2,4 L3.4,5.6 L6.2,2.2" stroke="#111" stroke-width="1.1" fill="none"/></svg>
<div class="t" style="top:265.9px;height:13px;line-height:13px;font-size:9.4px;left:344.1px;color:#0a0aff;font-weight:bold;"><label style="transform:scaleX(1.006);transform-origin:0 50%;">水合前</label></div>
<div style="left:380.7px;top:268.3px;width:8px;height:8px;background:#fff;border:1px solid;border-color:#7a7a7a #dcdcdc #dcdcdc #7a7a7a;box-shadow:inset 1px 1px 0 #b0b0b0;"></div>
<div class="t" style="top:265.9px;height:13px;line-height:13px;font-size:9.4px;left:393.1px;color:#0a0aff;font-weight:bold;"><label style="transform:scaleX(0.984);transform-origin:0 50%;">水合后</label></div>
<div class="grp" style="left:233.1px;top:348.8px;width:191.4px;height:76.6px;border:1px solid #d6d6d6;"></div>
<div style="left:237.5px;top:343.8px;width:35.5px;height:11px;background:#fff;"></div>
<div class="t" style="top:343.1px;height:12px;line-height:12px;font-size:8.2px;left:239px;font-weight:bold;"><span style="transform:scaleX(0.992);transform-origin:0 50%;">测试结果</span></div>
<div class="t" style="top:355.1px;height:11px;line-height:11px;font-size:7.8px;left:160.9px;width:240px;text-align:center;color:#222;font-weight:bold;"><span style="transform:scaleX(1.000);transform-origin:50% 50%;">标准</span></div>
<div class="t" style="top:355.1px;height:11px;line-height:11px;font-size:7.8px;left:220.9px;width:240px;text-align:center;color:#222;font-weight:bold;"><span style="transform:scaleX(1.000);transform-origin:50% 50%;">实测</span></div>
<div class="t" style="top:355.1px;height:11px;line-height:11px;font-size:7.8px;left:280.9px;width:240px;text-align:center;color:#222;font-weight:bold;"><span style="transform:scaleX(1.000);transform-origin:50% 50%;">判定</span></div>
<div class="t" style="top:370.7px;height:13px;line-height:13px;font-size:9.5px;left:237.1px;"><span style="transform:scaleX(0.933);transform-origin:0 50%;"><span style="font-size:114%">Tr</span>时间</span></div>
<div class="inp" style="left:267.1px;top:369.5px;width:32.1px;height:14.7px;background:#fff;"></div>
<div class="t" style="top:370.9px;height:13px;line-height:13px;font-size:9px;left:57.9px;width:240px;text-align:right;color:#222;"><span style="transform:scaleX(0.945);transform-origin:100% 50%;">254</span></div>
<div class="t" style="top:370.4px;height:14px;line-height:14px;font-size:10px;left:303.3px;color:#111;"><span style="transform:scaleX(0.839);transform-origin:0 50%;">S</span></div>
<div class="inp" style="left:327.5px;top:369.5px;width:32px;height:14.7px;background:#fddcbc;"></div>
<div class="t" style="top:370.9px;height:13px;line-height:13px;font-size:9px;left:118.1px;width:240px;text-align:right;color:#222;"><span style="transform:scaleX(0.948);transform-origin:100% 50%;">187</span></div>
<div class="t" style="top:370.4px;height:14px;line-height:14px;font-size:10px;left:363.7px;color:#111;"><span style="transform:scaleX(0.839);transform-origin:0 50%;">S</span></div>
<div class="inp" style="left:387px;top:369.5px;width:32.3px;height:14.7px;background:#e2e2e2;"></div>
<div class="t" style="top:371.3px;height:12px;line-height:12px;font-size:8.2px;left:283.1px;width:240px;text-align:center;color:#222;"><span style="transform:scaleX(0.976);transform-origin:50% 50%;">合格</span></div>
<div class="t" style="top:389.1px;height:13px;line-height:13px;font-size:9.5px;left:239.5px;"><span style="transform:scaleX(0.899);transform-origin:0 50%;"><span style="font-size:114%">VT</span>值</span></div>
<div class="inp" style="left:267.1px;top:387.8px;width:32.1px;height:14.6px;background:#fff;"></div>
<div class="t" style="top:389.3px;height:13px;line-height:13px;font-size:9px;left:57.9px;width:240px;text-align:right;color:#222;"><span style="transform:scaleX(0.945);transform-origin:100% 50%;">580</span></div>
<div class="t" style="top:388.8px;height:14px;line-height:14px;font-size:10.2px;left:303.1px;color:#111;font-weight:bold;font-family:'Liberation Serif','Noto Serif CJK SC',serif;"><span style="transform:scaleX(0.842);transform-origin:0 50%;">V</span></div>
<div class="inp" style="left:327.5px;top:387.8px;width:32px;height:14.6px;background:#fddcbc;"></div>
<div class="t" style="top:389.3px;height:13px;line-height:13px;font-size:9px;left:118.1px;width:240px;text-align:right;color:#222;"><span style="transform:scaleX(0.948);transform-origin:100% 50%;">590.8</span></div>
<div class="t" style="top:388.8px;height:14px;line-height:14px;font-size:10.2px;left:363.5px;color:#111;font-weight:bold;font-family:'Liberation Serif','Noto Serif CJK SC',serif;"><span style="transform:scaleX(0.842);transform-origin:0 50%;">V</span></div>
<div class="inp" style="left:387px;top:387.8px;width:32.3px;height:14.6px;background:#e2e2e2;"></div>
<div class="t" style="top:389.7px;height:12px;line-height:12px;font-size:8.2px;left:283.1px;width:240px;text-align:center;color:#222;"><span style="transform:scaleX(0.976);transform-origin:50% 50%;">合格</span></div>
<div class="t" style="top:405.4px;height:13px;line-height:13px;font-size:9.5px;left:236.5px;"><span style="transform:scaleX(0.989);transform-origin:0 50%;">漏电流</span></div>
<div class="inp" style="left:267.1px;top:404.6px;width:32.1px;height:14.6px;background:#fff;"></div>
<div class="t" style="top:405.6px;height:13px;line-height:13px;font-size:9px;left:57.9px;width:240px;text-align:right;color:#222;"><span style="transform:scaleX(0.945);transform-origin:100% 50%;">100</span></div>
<div class="t" style="top:405.1px;height:14px;line-height:14px;font-size:10.2px;left:302.5px;color:#111;font-weight:bold;font-family:'Liberation Serif','Noto Serif CJK SC',serif;"><span style="transform:scaleX(0.813);transform-origin:0 50%;">uA</span></div>
<div class="inp" style="left:327.5px;top:404.6px;width:32px;height:14.6px;background:#c2c2ff;"></div>
<div class="t" style="top:405.6px;height:13px;line-height:13px;font-size:9px;left:118.1px;width:240px;text-align:right;color:#222;"><span style="transform:scaleX(0.947);transform-origin:100% 50%;">0</span></div>
<div class="t" style="top:405.1px;height:14px;line-height:14px;font-size:10.2px;left:361.9px;color:#111;font-weight:bold;font-family:'Liberation Serif','Noto Serif CJK SC',serif;"><span style="transform:scaleX(0.813);transform-origin:0 50%;">uA</span></div>
<div class="inp" style="left:387px;top:404.6px;width:32.3px;height:14.6px;background:#e2e2e2;"></div>
<div class="t" style="top:406px;height:12px;line-height:12px;font-size:8.2px;left:283.1px;width:240px;text-align:center;color:#222;"><span style="transform:scaleX(0.976);transform-origin:50% 50%;">待定</span></div>
</section>
<section id="ch3">
<div class="grp" style="left:453.7px;top:8.9px;width:204.2px;height:201.6px;border:1px solid #d6d6d6;"></div>
<div style="left:458.7px;top:3.9px;width:24px;height:11px;background:#fff;"></div>
<div class="t" style="top:2.7px;height:13px;line-height:13px;font-size:9.3px;left:460.2px;font-weight:bold;"><span style="transform:scaleX(0.884);transform-origin:0 50%;">通道3</span></div>
<div style="left:463.6px;top:15.2px;width:182.6px;height:157.2px;border:1.2px solid;border-color:#7c7c7c #eeeeee #eeeeee #7c7c7c;"></div>
<svg width="206" height="175" viewBox="0 0 206 175" style="left:453px;top:0;overflow:visible"><path d="M22.25,19.20H183.75 M22.25,37.60H183.75 M22.25,56.00H183.75 M22.25,74.60H183.75 M22.25,93.40H183.75 M22.25,112.90H183.75 M22.25,130.30H183.75 M41.81,19.20V148.40 M62.37,19.20V148.40 M82.93,19.20V148.40 M103.49,19.20V148.40 M124.05,19.20V148.40 M144.61,19.20V148.40 M165.17,19.20V148.40" stroke="#484848" stroke-width="1.1" stroke-dasharray="1.5 2.4" fill="none"/><path d="M22.25,65.60H96.80 M96.80,65.60V148.40 M172.50,55V148.40" stroke="#555" stroke-width="1.1" stroke-dasharray="1.5 2.4" fill="none"/></svg>
<div class="t" style="top:19.6px;height:9.8px;line-height:9.8px;font-size:9.6px;left:476.6px;color:#222;"><span style="background:#fff;transform:scaleX(0.862);transform-origin:0 50%;">812</span></div>
<div class="t" style="top:19.6px;height:9.8px;line-height:9.8px;font-size:9.6px;left:395.4px;width:240px;text-align:right;color:#222;"><span style="background:#fff;transform:scaleX(0.839);transform-origin:100% 50%;">2.8</span></div>
<div class="t" style="top:38.7px;height:9.8px;line-height:9.8px;font-size:9.6px;left:476.6px;color:#222;"><span style="background:#fff;transform:scaleX(0.862);transform-origin:0 50%;">696</span></div>
<div class="t" style="top:38.7px;height:9.8px;line-height:9.8px;font-size:9.6px;left:395.4px;width:240px;text-align:right;color:#222;"><span style="background:#fff;transform:scaleX(0.839);transform-origin:100% 50%;">2.4</span></div>
<div class="t" style="top:57.1px;height:9.8px;line-height:9.8px;font-size:9.6px;left:476.6px;color:#222;"><span style="background:#fff;transform:scaleX(0.862);transform-origin:0 50%;">580</span></div>
<div class="t" style="top:57.1px;height:9.8px;line-height:9.8px;font-size:9.6px;left:395.4px;width:240px;text-align:right;color:#222;"><span style="background:#fff;transform:scaleX(0.839);transform-origin:100% 50%;">2.0</span></div>
<div class="t" style="top:75.7px;height:9.8px;line-height:9.8px;font-size:9.6px;left:476.6px;color:#222;"><span style="background:#fff;transform:scaleX(0.862);transform-origin:0 50%;">464</span></div>
<div class="t" style="top:75.7px;height:9.8px;line-height:9.8px;font-size:9.6px;left:395.4px;width:240px;text-align:right;color:#222;"><span style="background:#fff;transform:scaleX(0.839);transform-origin:100% 50%;">1.6</span></div>
<div class="t" style="top:94.5px;height:9.8px;line-height:9.8px;font-size:9.6px;left:476.6px;color:#222;"><span style="background:#fff;transform:scaleX(0.862);transform-origin:0 50%;">348</span></div>
<div class="t" style="top:94.5px;height:9.8px;line-height:9.8px;font-size:9.6px;left:395.4px;width:240px;text-align:right;color:#222;"><span style="background:#fff;transform:scaleX(0.839);transform-origin:100% 50%;">1.2</span></div>
<div class="t" style="top:114px;height:9.8px;line-height:9.8px;font-size:9.6px;left:476.6px;color:#222;"><span style="background:#fff;transform:scaleX(0.862);transform-origin:0 50%;">232</span></div>
<div class="t" style="top:114px;height:9.8px;line-height:9.8px;font-size:9.6px;left:395.4px;width:240px;text-align:right;color:#222;"><span style="background:#fff;transform:scaleX(0.839);transform-origin:100% 50%;">0.8</span></div>
<div class="t" style="top:131.4px;height:9.8px;line-height:9.8px;font-size:9.6px;left:476.6px;color:#222;"><span style="background:#fff;transform:scaleX(0.902);transform-origin:0 50%;">116</span></div>
<div class="t" style="top:131.4px;height:9.8px;line-height:9.8px;font-size:9.6px;left:395.4px;width:240px;text-align:right;color:#222;"><span style="background:#fff;transform:scaleX(0.839);transform-origin:100% 50%;">0.4</span></div>
<div class="t" style="top:19.6px;height:9.8px;line-height:9.8px;font-size:9.6px;left:492.4px;color:#222;"><span style="background:#fff;transform:scaleX(0.857);transform-origin:0 50%;">U(V)</span></div>
<div class="t" style="top:19.6px;height:9.8px;line-height:9.8px;font-size:9.6px;left:601.8px;color:#222;"><span style="background:#fff;transform:scaleX(0.878);transform-origin:0 50%;">I(mA)</span></div>
<div class="t" style="top:19.5px;height:9.8px;line-height:9.8px;font-size:9.6px;left:534.2px;color:#222;"><span style="background:#fff;transform:scaleX(0.760);transform-origin:0 50%;">VMax:599.0V</span></div>
<div class="t" style="top:28.8px;height:9.2px;line-height:9.2px;font-size:9px;left:533.6px;color:#222;"><span style="background:#fff;transform:scaleX(0.802);transform-origin:0 50%;">跌落:8.1V</span></div>
<div class="t" style="top:66.3px;height:9.2px;line-height:9.2px;font-size:9px;left:555px;color:#222;"><span style="background:#fff;transform:scaleX(0.797);transform-origin:0 50%;">A点,181S</span></div>
<div class="t" style="top:55.2px;height:10px;line-height:10px;font-size:7px;left:638.6px;color:#333;"><span style="">点</span></div>
<div class="t" style="top:142.2px;height:8.8px;line-height:8.8px;font-size:8.6px;left:620.3px;color:#222;"><span style="background:#fff;transform:scaleX(0.784);transform-origin:0 50%;">T(S)</span></div>
<svg width="206" height="175" viewBox="0 0 206 175" style="left:453px;top:0;overflow:visible"><path d="M21.25,55.8H173.00" stroke="#4545ff" stroke-width="1.35" fill="none"/><path d="M21.25,18V149.8 M184.75,18V149.8 M20.45,149H185.55" stroke="#111" stroke-width="1.6" fill="none"/><path d="M21.25,55.8V148.2" stroke="#2222dd" stroke-width="1.6" fill="none"/><path d="M21.3,148.2 C23.8,146.6 31.3,142.2 36.1,138.4 C40.9,134.6 45.7,129.7 50.2,125.2 C54.7,120.7 58.7,116.5 63.0,111.6 C67.2,106.7 70.1,103.3 75.8,95.7 C81.4,88.1 91.9,72.7 96.8,66.0 C101.7,59.3 103.6,57.4 105.0,55.7 L106.8,54.5 L109.2,53.3 H119.0 L120.6,54.2 L172.5,54.5" stroke="#ff2626" stroke-width="1.35" fill="none" stroke-linejoin="round"/><circle cx="96.8" cy="65.8" r="1.9" fill="#111"/><circle cx="172.5" cy="54.9" r="1.9" fill="#111"/></svg>
<div class="t" style="top:149.1px;height:13px;line-height:13px;font-size:9.6px;left:351.75px;width:240px;text-align:center;color:#222;"><span style="transform:scaleX(0.861);transform-origin:50% 50%;">0</span></div>
<div class="t" style="top:149.1px;height:13px;line-height:13px;font-size:9.6px;left:375.5px;width:240px;text-align:center;color:#222;"><span style="transform:scaleX(0.881);transform-origin:50% 50%;">50</span></div>
<div class="t" style="top:149.1px;height:13px;line-height:13px;font-size:9.6px;left:398px;width:240px;text-align:center;color:#222;"><span style="transform:scaleX(0.887);transform-origin:50% 50%;">100</span></div>
<div class="t" style="top:149.1px;height:13px;line-height:13px;font-size:9.6px;left:418.6px;width:240px;text-align:center;color:#222;"><span style="transform:scaleX(0.887);transform-origin:50% 50%;">150</span></div>
<div class="t" style="top:149.1px;height:13px;line-height:13px;font-size:9.6px;left:439px;width:240px;text-align:center;color:#222;"><span style="transform:scaleX(0.887);transform-origin:50% 50%;">200</span></div>
<div class="t" style="top:149.1px;height:13px;line-height:13px;font-size:9.6px;left:459px;width:240px;text-align:center;color:#222;"><span style="transform:scaleX(0.887);transform-origin:50% 50%;">250</span></div>
<div class="t" style="top:149.1px;height:13px;line-height:13px;font-size:9.6px;left:479px;width:240px;text-align:center;color:#222;"><span style="transform:scaleX(0.887);transform-origin:50% 50%;">300</span></div>
<div class="t" style="top:149.1px;height:13px;line-height:13px;font-size:9.6px;left:500px;width:240px;text-align:center;color:#222;"><span style="transform:scaleX(0.887);transform-origin:50% 50%;">350</span></div>
<div style="left:631px;top:150.5px;width:14.7px;height:12px;overflow:hidden;">
<div class="t" style="top:-1.4px;height:13px;line-height:13px;font-size:9.6px;left:3.2px;color:#222;"><span style="transform:scaleX(0.887);transform-origin:0 50%;">400</span></div>
</div>
<div class="t" style="top:160.1px;height:13px;line-height:13px;font-size:9.3px;left:503.6px;color:#222;"><span style="transform:scaleX(0.899);transform-origin:0 50%;">鼠标点 : 281.8V,0.972mA,364S</span></div>
<div class="t" style="top:177.1px;height:13px;line-height:13px;font-size:9.5px;left:471.7px;"><span style="transform:scaleX(0.989);transform-origin:0 50%;">电压</span></div>
<div class="inp" style="left:498.6px;top:174.4px;width:34.6px;height:15.4px;background:#fff;"></div>
<div class="t" style="top:174.1px;height:17px;line-height:17px;font-size:12.6px;left:292px;width:240px;text-align:right;color:#ff1f1f;font-family:'Liberation Serif','Noto Serif CJK SC',serif;"><span style="transform:scaleX(1.002);transform-origin:100% 50%;">590.9</span></div>
<div class="t" style="top:176.6px;height:14px;line-height:14px;font-size:10.2px;left:539.2px;"><span style="transform:scaleX(0.942);transform-origin:0 50%;">V</span></div>
<div class="t" style="top:177.1px;height:13px;line-height:13px;font-size:9.5px;left:558px;"><span style="transform:scaleX(1.020);transform-origin:0 50%;">电流</span></div>
<div class="inp" style="left:585.5px;top:174.4px;width:34.7px;height:15.4px;background:#fff;"></div>
<div class="t" style="top:174.1px;height:17px;line-height:17px;font-size:12.6px;left:378.8px;width:240px;text-align:right;color:#1f1fff;font-family:'Liberation Serif','Noto Serif CJK SC',serif;"><span style="transform:scaleX(0.953);transform-origin:100% 50%;">2.000</span></div>
<div class="t" style="top:176.6px;height:14px;line-height:14px;font-size:10.2px;left:623.6px;"><span style="transform:scaleX(0.982);transform-origin:0 50%;">mA</span></div>
<div class="t" style="top:193.3px;height:13px;line-height:13px;font-size:9.5px;left:471.7px;"><span style="transform:scaleX(0.989);transform-origin:0 50%;">时间</span></div>
<div class="inp" style="left:498.6px;top:192px;width:34.6px;height:14.6px;background:#fff;"></div>
<div class="t" style="top:190.9px;height:17px;line-height:17px;font-size:12.6px;left:291.9px;width:240px;text-align:right;color:#ff22ff;font-family:'Liberation Serif','Noto Serif CJK SC',serif;"><span style="transform:scaleX(0.963);transform-origin:100% 50%;">361</span></div>
<div class="t" style="top:192.9px;height:14px;line-height:14px;font-size:10.2px;left:539px;"><span style="transform:scaleX(0.794);transform-origin:0 50%;">S</span></div>
<div style="left:597.1px;top:194.7px;width:11.8px;height:11.8px;border-radius:50%;background:#ff0d0d;border:0.8px solid #b30000;"></div>
<div class="grp" style="left:453.7px;top:217.5px;width:204.2px;height:215.4px;border:1px solid #d6d6d6;"></div>
<div style="left:459px;top:212.5px;width:38.5px;height:11px;background:#fff;"></div>
<div class="t" style="top:211.8px;height:12px;line-height:12px;font-size:8.6px;left:460.5px;font-weight:bold;"><span style="transform:scaleX(1.011);transform-origin:0 50%;">TV+LC-3</span></div>
<div class="t" style="top:224.8px;height:13px;line-height:13px;font-size:9.5px;left:463px;"><span style="transform:scaleX(1.000);transform-origin:0 50%;">测试电压</span></div>
<div class="inp" style="left:508.9px;top:223.8px;width:26.7px;height:14.4px;background:#fff;"></div>
<div class="t" style="top:225px;height:13px;line-height:13px;font-size:9px;left:294.4px;width:240px;text-align:right;color:#222;"><span style="transform:scaleX(0.945);transform-origin:100% 50%;">580</span></div>
<div class="t" style="top:224.5px;height:14px;line-height:14px;font-size:10.2px;left:540px;color:#111;font-weight:bold;font-family:'Liberation Serif','Noto Serif CJK SC',serif;"><span style="transform:scaleX(0.842);transform-origin:0 50%;">V</span></div>
<div class="t" style="top:224.8px;height:13px;line-height:13px;font-size:9.5px;left:563px;"><span style="transform:scaleX(1.000);transform-origin:0 50%;">漏电电压</span></div>
<div class="inp" style="left:607.4px;top:223.8px;width:26.4px;height:14.4px;background:#fff;"></div>
<div class="t" style="top:225px;height:13px;line-height:13px;font-size:9px;left:392.6px;width:240px;text-align:right;color:#222;"><span style="transform:scaleX(0.945);transform-origin:100% 50%;">580</span></div>
<div class="t" style="top:224.5px;height:14px;line-height:14px;font-size:10.2px;left:639.2px;color:#111;font-weight:bold;font-family:'Liberation Serif','Noto Serif CJK SC',serif;"><span style="transform:scaleX(0.842);transform-origin:0 50%;">V</span></div>
<div class="t" style="top:241.2px;height:13px;line-height:13px;font-size:9.5px;left:463px;"><span style="transform:scaleX(0.976);transform-origin:0 50%;"><span style="font-size:114%">Vr</span>取值比</span></div>
<div class="inp" style="left:508.9px;top:240.2px;width:26.7px;height:14.4px;background:#fff;"></div>
<div class="t" style="top:241.4px;height:13px;line-height:13px;font-size:9px;left:294.4px;width:240px;text-align:right;color:#8c8c8c;"><span style="transform:scaleX(0.959);transform-origin:100% 50%;">90</span></div>
<div class="t" style="top:240.9px;height:14px;line-height:14px;font-size:10.2px;left:539.8px;color:#111;font-weight:bold;font-family:'Liberation Serif','Noto Serif CJK SC',serif;"><span style="transform:scaleX(0.805);transform-origin:0 50%;">%</span></div>
<div class="t" style="top:241.2px;height:13px;line-height:13px;font-size:9.5px;left:563px;"><span style="transform:scaleX(1.000);transform-origin:0 50%;">漏电时间</span></div>
<div class="inp" style="left:607.4px;top:240.2px;width:26.4px;height:14.4px;background:#fff;"></div>
<div class="t" style="top:241.4px;height:13px;line-height:13px;font-size:9px;left:392.6px;width:240px;text-align:right;color:#222;"><span style="transform:scaleX(0.959);transform-origin:100% 50%;">60</span></div>
<div class="t" style="top:240.9px;height:14px;line-height:14px;font-size:10px;left:639.4px;color:#111;"><span style="transform:scaleX(0.809);transform-origin:0 50%;">S</span></div>
<div class="t" style="top:257.7px;height:13px;line-height:13px;font-size:9.5px;left:463px;"><span style="transform:scaleX(1.000);transform-origin:0 50%;">升压电流</span></div>
<div class="inp" style="left:508.9px;top:256.7px;width:26.7px;height:14.4px;background:#fff;"></div>
<div class="t" style="top:257.9px;height:13px;line-height:13px;font-size:9px;left:294.4px;width:240px;text-align:right;color:#222;"><span style="transform:scaleX(0.957);transform-origin:100% 50%;">2</span></div>
<div class="t" style="top:257.4px;height:14px;line-height:14px;font-size:10.2px;left:538px;color:#111;font-weight:bold;font-family:'Liberation Serif','Noto Serif CJK SC',serif;"><span style="transform:scaleX(0.858);transform-origin:0 50%;">mA</span></div>
<div class="t" style="top:273.7px;height:13px;line-height:13px;font-size:9.5px;left:458px;"><span style="transform:scaleX(0.939);transform-origin:0 50%;"><span style="font-size:114%">VT</span>测试时间</span></div>
<div class="inp" style="left:508.9px;top:272.7px;width:26.7px;height:14.4px;background:#fff;"></div>
<div class="t" style="top:273.9px;height:13px;line-height:13px;font-size:9px;left:294.4px;width:240px;text-align:right;color:#222;"><span style="transform:scaleX(0.945);transform-origin:100% 50%;">180</span></div>
<div class="t" style="top:273.4px;height:14px;line-height:14px;font-size:10px;left:539.6px;color:#111;"><span style="transform:scaleX(0.809);transform-origin:0 50%;">S</span></div>
<div class="t" style="top:290.3px;height:13px;line-height:13px;font-size:9.5px;left:463px;"><span style="transform:scaleX(1.000);transform-origin:0 50%;">铝箔批号</span></div>
<div class="inp" style="left:508.9px;top:289.3px;width:135.9px;height:14.4px;background:#fff;"></div>
<div class="t" style="top:290.5px;height:13px;line-height:13px;font-size:9px;left:522.4px;color:#222;"><span style="transform:scaleX(0.973);transform-origin:0 50%;">X19HG2-11-107-1-49</span></div>
<div class="t" style="top:290.5px;height:13px;line-height:13px;font-size:9px;left:403.4px;width:240px;text-align:right;color:#222;"><span style="transform:scaleX(0.926);transform-origin:100% 50%;">580vf</span></div>
<div class="t" style="top:306.5px;height:13px;line-height:13px;font-size:9.5px;left:463px;"><span style="transform:scaleX(1.000);transform-origin:0 50%;">生产厂家</span></div>
<div class="inp" style="left:508.9px;top:305.5px;width:135.9px;height:14.4px;background:#fff;"></div>
<div class="t" style="top:306.7px;height:13px;line-height:13px;font-size:9px;left:403.4px;width:240px;text-align:right;color:#222;"><span style="transform:scaleX(0.899);transform-origin:100% 50%;">宏远</span></div>
<div class="t" style="top:322.8px;height:13px;line-height:13px;font-size:9.5px;left:463px;"><span style="transform:scaleX(1.000);transform-origin:0 50%;">测试日期</span></div>
<div class="inp" style="left:508.9px;top:321.8px;width:45.2px;height:14.4px;background:#fff;">
<div class="t" style="top:0px;height:13px;line-height:13px;font-size:9px;left:1.6px;color:#222;"><span style="transform:scaleX(0.990);transform-origin:0 50%;">2020-07-28</span></div>
</div>
<div class="t" style="top:322.8px;height:13px;line-height:13px;font-size:9.5px;left:558px;"><span style="transform:scaleX(0.989);transform-origin:0 50%;">测试人员</span></div>
<div class="inp" style="left:600px;top:321.8px;width:44.8px;height:14.4px;background:#fff;"></div>
<div class="t" style="top:323px;height:13px;line-height:13px;font-size:9px;left:402.2px;width:240px;text-align:right;color:#222;"><span style="transform:scaleX(0.957);transform-origin:100% 50%;">0</span></div>
<div class="grp" style="left:459.6px;top:348.8px;width:191.4px;height:76.6px;border:1px solid #d6d6d6;"></div>
<div style="left:464px;top:343.8px;width:35.5px;height:11px;background:#fff;"></div>
<div class="t" style="top:343.1px;height:12px;line-height:12px;font-size:8.2px;left:465.5px;font-weight:bold;"><span style="transform:scaleX(0.992);transform-origin:0 50%;">测试结果</span></div>
<div class="t" style="top:355.1px;height:11px;line-height:11px;font-size:7.8px;left:387.4px;width:240px;text-align:center;color:#222;font-weight:bold;"><span style="transform:scaleX(1.000);transform-origin:50% 50%;">标准</span></div>
<div class="t" style="top:355.1px;height:11px;line-height:11px;font-size:7.8px;left:447.4px;width:240px;text-align:center;color:#222;font-weight:bold;"><span style="transform:scaleX(1.000);transform-origin:50% 50%;">实测</span></div>
<div class="t" style="top:355.1px;height:11px;line-height:11px;font-size:7.8px;left:507.4px;width:240px;text-align:center;color:#222;font-weight:bold;"><span style="transform:scaleX(1.000);transform-origin:50% 50%;">判定</span></div>
<div class="t" style="top:370.7px;height:13px;line-height:13px;font-size:9.5px;left:463.6px;"><span style="transform:scaleX(0.933);transform-origin:0 50%;"><span style="font-size:114%">Tr</span>时间</span></div>
<div class="inp" style="left:493.6px;top:369.5px;width:32.1px;height:14.7px;background:#fff;"></div>
<div class="t" style="top:370.9px;height:13px;line-height:13px;font-size:9px;left:284.4px;width:240px;text-align:right;color:#222;"><span style="transform:scaleX(0.945);transform-origin:100% 50%;">254</span></div>
<div class="t" style="top:370.4px;height:14px;line-height:14px;font-size:10px;left:529.8px;color:#111;"><span style="transform:scaleX(0.839);transform-origin:0 50%;">S</span></div>
<div class="inp" style="left:554px;top:369.5px;width:32px;height:14.7px;background:#fddcbc;"></div>
<div class="t" style="top:370.9px;height:13px;line-height:13px;font-size:9px;left:344.6px;width:240px;text-align:right;color:#222;"><span style="transform:scaleX(0.948);transform-origin:100% 50%;">181</span></div>
<div class="t" style="top:370.4px;height:14px;line-height:14px;font-size:10px;left:590.2px;color:#111;"><span style="transform:scaleX(0.839);transform-origin:0 50%;">S</span></div>
<div class="inp" style="left:613.5px;top:369.5px;width:32.3px;height:14.7px;background:#e2e2e2;"></div>
<div class="t" style="top:371.3px;height:12px;line-height:12px;font-size:8.2px;left:509.6px;width:240px;text-align:center;color:#222;"><span style="transform:scaleX(0.976);transform-origin:50% 50%;">合格</span></div>
<div class="t" style="top:389.1px;height:13px;line-height:13px;font-size:9.5px;left:466px;"><span style="transform:scaleX(0.899);transform-origin:0 50%;"><span style="font-size:114%">VT</span>值</span></div>
<div class="inp" style="left:493.6px;top:387.8px;width:32.1px;height:14.6px;background:#fff;"></div>
<div class="t" style="top:389.3px;height:13px;line-height:13px;font-size:9px;left:284.4px;width:240px;text-align:right;color:#222;"><span style="transform:scaleX(0.945);transform-origin:100% 50%;">580</span></div>
<div class="t" style="top:388.8px;height:14px;line-height:14px;font-size:10.2px;left:529.6px;color:#111;font-weight:bold;font-family:'Liberation Serif','Noto Serif CJK SC',serif;"><span style="transform:scaleX(0.842);transform-origin:0 50%;">V</span></div>
<div class="inp" style="left:554px;top:387.8px;width:32px;height:14.6px;background:#fddcbc;"></div>
<div class="t" style="top:389.3px;height:13px;line-height:13px;font-size:9px;left:344.6px;width:240px;text-align:right;color:#222;"><span style="transform:scaleX(0.948);transform-origin:100% 50%;">590.9</span></div>
<div class="t" style="top:388.8px;height:14px;line-height:14px;font-size:10.2px;left:590px;color:#111;font-weight:bold;font-family:'Liberation Serif','Noto Serif CJK SC',serif;"><span style="transform:scaleX(0.842);transform-origin:0 50%;">V</span></div>
<div class="inp" style="left:613.5px;top:387.8px;width:32.3px;height:14.6px;background:#e2e2e2;"></div>
<div class="t" style="top:389.7px;height:12px;line-height:12px;font-size:8.2px;left:509.6px;width:240px;text-align:center;color:#222;"><span style="transform:scaleX(0.976);transform-origin:50% 50%;">合格</span></div>
<div class="t" style="top:405.4px;height:13px;line-height:13px;font-size:9.5px;left:463px;"><span style="transform:scaleX(0.989);transform-origin:0 50%;">漏电流</span></div>
<div class="inp" style="left:493.6px;top:404.6px;width:32.1px;height:14.6px;background:#fff;"></div>
<div class="t" style="top:405.6px;height:13px;line-height:13px;font-size:9px;left:284.4px;width:240px;text-align:right;color:#222;"><span style="transform:scaleX(0.945);transform-origin:100% 50%;">100</span></div>
<div class="t" style="top:405.1px;height:14px;line-height:14px;font-size:10.2px;left:529px;color:#111;font-weight:bold;font-family:'Liberation Serif','Noto Serif CJK SC',serif;"><span style="transform:scaleX(0.813);transform-origin:0 50%;">uA</span></div>
<div class="inp" style="left:554px;top:404.6px;width:32px;height:14.6px;background:#c2c2ff;"></div>
<div class="t" style="top:405.6px;height:13px;line-height:13px;font-size:9px;left:344.6px;width:240px;text-align:right;color:#222;"><span style="transform:scaleX(0.947);transform-origin:100% 50%;">0</span></div>
<div class="t" style="top:405.1px;height:14px;line-height:14px;font-size:10.2px;left:588.4px;color:#111;font-weight:bold;font-family:'Liberation Serif','Noto Serif CJK SC',serif;"><span style="transform:scaleX(0.813);transform-origin:0 50%;">uA</span></div>
<div class="inp" style="left:613.5px;top:404.6px;width:32.3px;height:14.6px;background:#e2e2e2;"></div>
<div class="t" style="top:406px;height:12px;line-height:12px;font-size:8.2px;left:509.6px;width:240px;text-align:center;color:#222;"><span style="transform:scaleX(0.976);transform-origin:50% 50%;">待定</span></div>
</section>
<section id="app">
<div style="left:659.4px;top:4.7px;width:655.2px;height:5.5px;background:linear-gradient(#1a6af2,#0549da);"></div>
<div style="left:663px;top:4.7px;width:200px;height:2.6px;overflow:hidden;">
<div class="t" style="top:-6.1px;height:9px;line-height:9px;font-size:6.4px;left:0.5px;color:#e8eefc;font-weight:bold;"><span style="">电解液闪火电压测试系统 - [闪火测试]</span></div>
</div>
<div style="left:1289px;top:4.7px;width:7.6px;height:3.5px;background:#3a7cec;border-radius:0 0 1.5px 1.5px;border:0.5px solid #9fc0f8;border-top:0;"></div>
<div style="left:1297.4px;top:4.7px;width:7.6px;height:3.5px;background:#3a7cec;border-radius:0 0 1.5px 1.5px;border:0.5px solid #9fc0f8;border-top:0;"></div>
<div style="left:1306px;top:4.7px;width:7.4px;height:3.5px;background:#e0562c;border-radius:0 0 1.5px 1.5px;border:0.5px solid #f0b8a0;border-top:0;"></div>
<div style="left:659.4px;top:10.2px;width:655.2px;height:8.7px;background:#efecdf;"></div>
<div style="left:659.4px;top:18.9px;width:655.2px;height:22.1px;background:#ece9d8;border-bottom:1px solid #b9b5a3;"></div>
<div style="left:659.4px;top:41px;width:655.2px;height:1.2px;background:#f7f6f0;"></div>
<div style="left:659.4px;top:42.2px;width:655.2px;height:377.4px;background:#fff;"></div>
<div style="left:1314px;top:4.7px;width:1.2px;height:428.3px;background:#a8a8a8;"></div>
<div style="left:1315.2px;top:0px;width:2.8px;height:433px;background:#fbfbfa;"></div>
<svg width="8" height="8" viewBox="0 0 8 8" style="left:661.2px;top:10.6px"><path d="M1,7 L3,1 L4.5,4 L6.5,2 L7,7Z" fill="#7a5fc0"/><circle cx="5.8" cy="2.2" r="1.3" fill="#e8c020"/><path d="M1,7H7" stroke="#c03030" stroke-width="1"/></svg>
<div class="t" style="top:10.4px;height:8px;line-height:8px;font-size:5.3px;left:670px;color:#111;font-weight:bold;"><span style="transform:scaleX(0.802);transform-origin:0 50%;">【文件】</span></div>
<div class="t" style="top:10.4px;height:8px;line-height:8px;font-size:5.3px;left:694.4px;color:#111;font-weight:bold;"><span style="transform:scaleX(0.786);transform-origin:0 50%;">【通信设置】</span></div>
<div class="t" style="top:10.4px;height:8px;line-height:8px;font-size:5.3px;left:727px;color:#111;font-weight:bold;"><span style="transform:scaleX(0.786);transform-origin:0 50%;">【测试项目】</span></div>
<div class="t" style="top:10.4px;height:8px;line-height:8px;font-size:5.3px;left:760px;color:#111;font-weight:bold;"><span style="transform:scaleX(0.786);transform-origin:0 50%;">【参数设置】</span></div>
<div class="t" style="top:10.4px;height:8px;line-height:8px;font-size:5.3px;left:792.5px;color:#111;font-weight:bold;"><span style="transform:scaleX(0.769);transform-origin:0 50%;">【工具】</span></div>
<div class="t" style="top:9.9px;height:9px;line-height:9px;font-size:6px;left:1296px;color:#222;font-weight:bold;"><span style="">-</span></div>
<div class="t" style="top:10.9px;height:7px;line-height:7px;font-size:4.6px;left:1301.5px;color:#222;font-family:'DejaVu Sans',sans-serif;"><span style="">🗗</span></div>
<div class="t" style="top:9.7px;height:9px;line-height:9px;font-size:6px;left:1309px;color:#222;font-weight:bold;"><span style="">x</span></div>
<div style="left:727.4px;top:19.6px;width:22.2px;height:20.6px;background:#f1efe4;border:0.6px solid #dcd8c8;border-radius:1.5px;"></div>
<div style="left:703.4px;top:21px;width:0.8px;height:18px;background:#cfcbb9;"></div>
<div style="left:725.6px;top:21px;width:0.8px;height:18px;background:#cfcbb9;"></div>
<div style="left:750.2px;top:21px;width:0.8px;height:18px;background:#cfcbb9;"></div>
<div style="left:795.2px;top:21px;width:0.8px;height:18px;background:#cfcbb9;"></div>
<div style="left:820.2px;top:21px;width:0.8px;height:18px;background:#cfcbb9;"></div>
<svg width="13" height="13" viewBox="0 0 13 13" style="left:663.5px;top:20.6px"><circle cx="5.6" cy="5" r="3.3" fill="#4a4458" stroke="#58981c" stroke-width="2.1"/><path d="M8.2,8 L10.4,10.6" stroke="#58981c" stroke-width="2.9" stroke-linecap="round"/><circle cx="5" cy="4.4" r="1.2" fill="#7d789a"/></svg>
<div class="t" style="top:33.5px;height:7px;line-height:7px;font-size:4.8px;left:665.6px;color:#111;font-weight:bold;"><span style="transform:scaleX(0.916);transform-origin:0 50%;">查询</span></div>
<svg width="13" height="13" viewBox="0 0 13 13" style="left:684.7px;top:20.6px"><ellipse cx="6.5" cy="10.4" rx="5.8" ry="1.8" fill="#1c1a22"/><path d="M1,8 Q1,5 6.5,5 Q12,5 12,8 Q12,10.5 6.5,10.5 Q1,10.5 1,8Z" fill="#e9e7ee" stroke="#6a6678" stroke-width="0.5"/><path d="M3.4,6.4 H9.6 V9.6 H3.4Z" fill="#5a2d82"/><path d="M4.6,1.2 Q6.5,0.2 8.4,1.2 L9,5 H4Z" fill="#f4f4f8" stroke="#8a8896" stroke-width="0.4"/><path d="M4.8,7.8H8.2" stroke="#d03a3a" stroke-width="0.9"/></svg>
<div class="t" style="top:33.5px;height:7px;line-height:7px;font-size:4.8px;left:682.2px;color:#111;font-weight:bold;"><span style="transform:scaleX(0.979);transform-origin:0 50%;">打印预览</span></div>
<svg width="13" height="13" viewBox="0 0 13 13" style="left:708.7px;top:20.6px"><path d="M1,1 H11.6 V12 H2.4 L1,10.6Z" fill="#3b8f24" stroke="#2a6a12" stroke-width="0.6"/><rect x="3" y="1" width="6.6" height="3.8" fill="#f3f5ee"/><rect x="6.8" y="1.5" width="1.6" height="2.6" fill="#3d7f20"/><rect x="2.8" y="6.6" width="7.2" height="5" fill="#fbfbf2"/></svg>
<div class="t" style="top:33.5px;height:7px;line-height:7px;font-size:4.8px;left:707px;color:#111;font-weight:bold;"><span style="transform:scaleX(0.937);transform-origin:0 50%;">保存数据</span></div>
<svg width="13" height="13" viewBox="0 0 13 13" style="left:731.7px;top:20.6px"><rect x="0.8" y="0.6" width="11.4" height="10.6" rx="1.2" fill="#223c98" stroke="#1b2f78" stroke-width="0.6"/><rect x="2.2" y="2" width="8.6" height="6.2" fill="#2f4fb0"/><path d="M3.4,3.6 L4.6,6.6 L5.6,4.4 L6.6,6.6 L7.8,3.6 M8.6,3.6 L9.6,6.6" stroke="#e8eefc" stroke-width="0.8" fill="none"/><rect x="0.8" y="9.6" width="11.4" height="2.4" fill="#4a6cc6"/></svg>
<div class="t" style="top:33.5px;height:7px;line-height:7px;font-size:4.8px;left:728.8px;color:#111;font-weight:bold;"><span style="transform:scaleX(0.958);transform-origin:0 50%;">保存全部</span></div>
<svg width="13" height="13" viewBox="0 0 13 13" style="left:755.5px;top:20.6px"><path d="M4.4,0.6 H8.6 V6.2 H12 L6.5,12.2 L1,6.2 H4.4Z" fill="#5aa823" stroke="#3c7d12" stroke-width="0.5"/><path d="M5.2,1.2 H6.4 V7 H5.2Z" fill="#8fd04e"/></svg>
<div class="t" style="top:33.5px;height:7px;line-height:7px;font-size:4.8px;left:752.6px;color:#111;font-weight:bold;"><span style="transform:scaleX(0.969);transform-origin:0 50%;">打开仪器</span></div>
<svg width="13" height="13" viewBox="0 0 13 13" style="left:777.3px;top:20.6px"><circle cx="6.5" cy="6.4" r="5.8" fill="#b4b0a8" stroke="#c9c6be" stroke-width="0.8"/><circle cx="6.5" cy="6.4" r="4" fill="#aaa69e"/></svg>
<div class="t" style="top:33.5px;height:7px;line-height:7px;font-size:4.8px;left:774.4px;color:#bdb9ac;font-weight:bold;"><span style="transform:scaleX(0.969);transform-origin:0 50%;">开始测试</span></div>
<svg width="13" height="13" viewBox="0 0 13 13" style="left:801.5px;top:20.6px"><path d="M2.6,5.6 Q3,1.6 7.2,2.2 L7.4,0.6 L10.8,3.4 L7,5.6 L7.1,4.2 Q4.8,3.8 4.4,6Z" fill="#2f74d6"/><path d="M10.4,7 Q10,11 5.8,10.4 L5.6,12 L2.2,9.2 L6,7 L5.9,8.4 Q8.2,8.8 8.6,6.6Z" fill="#5cb52a"/></svg>
<div class="t" style="top:33.5px;height:7px;line-height:7px;font-size:4.8px;left:803.6px;color:#111;font-weight:bold;"><span style="transform:scaleX(0.937);transform-origin:0 50%;">刷新</span></div>
<svg width="13" height="13" viewBox="0 0 13 13" style="left:826.1px;top:20.6px"><circle cx="8.8" cy="3" r="2.2" fill="#4fae2c"/><path d="M5.8,9.8 Q6,5.6 8.8,5.6 Q11.8,5.6 12,9.8Z" fill="#4fae2c"/><circle cx="4.6" cy="4.2" r="2.5" fill="#2a6fd0"/><path d="M0.8,12 Q1,7 4.6,7 Q8.4,7 8.6,12Z" fill="#2a6fd0"/></svg>
<div class="t" style="top:33.5px;height:7px;line-height:7px;font-size:4.8px;left:828.2px;color:#111;font-weight:bold;"><span style="transform:scaleX(0.937);transform-origin:0 50%;">帮助</span></div>
<svg width="13" height="13" viewBox="0 0 13 13" style="left:847.9px;top:20.6px"><circle cx="6.5" cy="6.4" r="6" fill="#4f9a2a" stroke="#2e6d16" stroke-width="0.6"/><path d="M2,4.2 Q6.5,0.4 11,4.2 Q6.5,2.8 2,4.2Z" fill="#b7e38f"/><rect x="3.8" y="4" width="2.4" height="2.2" fill="#e0482e"/><rect x="6.8" y="4" width="2.4" height="2.2" fill="#7fd13a"/><rect x="3.8" y="6.8" width="2.4" height="2.2" fill="#2f7fe0"/><rect x="6.8" y="6.8" width="2.4" height="2.2" fill="#f2c21f"/></svg>
<div class="t" style="top:33.5px;height:7px;line-height:7px;font-size:4.8px;left:845px;color:#111;font-weight:bold;"><span style="transform:scaleX(0.969);transform-origin:0 50%;">退出系统</span></div>
<svg width="1318" height="433" viewBox="0 0 1318 433" style="left:0;top:0"><path d="M685.0,54.00H1220.6 M685.0,100.84H1220.6 M685.0,147.69H1220.6 M685.0,194.53H1220.6 M685.0,241.37H1220.6 M685.0,288.21H1220.6 M685.0,335.06H1220.6 M751.20,54.0V380.9 M818.40,54.0V380.9 M885.60,54.0V380.9 M952.80,54.0V380.9 M1020.00,54.0V380.9 M1087.20,54.0V380.9 M1154.40,54.0V380.9" stroke="#c4c4c4" stroke-width="0.9" stroke-dasharray="1 0.9" fill="none"/><path d="M684.0,147.6H839" stroke="#8c8cbe" stroke-width="1.15" fill="none"/><path d="M684.0,54.0V382.5 M1221.6,54.0V382.5 M683.3,381.9H1222.3" stroke="#4a4a52" stroke-width="1.5" fill="none"/><path d="M684.4,368.0 C684.4,366.0 684.3,359.2 684.5,356.0 C684.7,352.8 684.8,351.1 685.4,348.5 C686.0,345.9 686.2,344.1 688.0,340.5 C689.8,336.9 692.9,331.9 696.0,327.0 C699.1,322.1 702.5,316.0 706.5,311.0 C710.5,306.0 715.4,301.4 719.8,297.0 C724.2,292.6 728.6,288.9 733.0,284.7 C737.4,280.4 741.9,276.8 746.3,271.5 C750.7,266.2 755.2,260.1 759.6,253.0 C764.0,245.9 768.5,237.9 772.9,229.0 C777.3,220.1 782.7,208.2 786.2,199.8 C789.7,191.4 792.2,183.8 794.0,178.6 C795.8,173.4 796.2,170.9 796.8,168.8 C797.4,166.7 797.5,166.5 797.6,166.0" stroke="#b85050" stroke-width="0.95" fill="none"/><path d="M798.4,166.4 L799.3,172.5 L800.4,166.6 L801.4,167.8 L802.1,169.6 L802.7,169.0 L803.6,166.3 L804.5,166.2 L805.3,166.4 L806.0,168.4 L807.1,166.7 L807.8,169.5 L809.0,169.2 L809.8,171.5 L810.4,170.8 L811.2,166.8 L811.9,167.7 L813.0,167.0 L813.9,169.6 L814.7,169.1 L815.4,166.3 L816.1,169.8 L817.0,167.8 L817.9,168.5 L818.7,170.4 L819.7,167.4 L820.7,168.9 L821.8,170.1 L822.6,171.5 L823.2,168.3 L824.3,166.9 L825.2,166.2 L826.2,170.3 L827.1,170.9 L827.9,169.9 L828.9,169.2 L829.7,170.7 L830.9,168.7 L831.9,166.3 L832.9,169.6 L834.1,170.6 L834.9,168.2 L835.9,166.1 L836.8,166.9 L837.4,166.3 L838.5,166.7" stroke="#c04848" stroke-width="0.8" fill="none"/><circle cx="797.6" cy="166.8" r="1.3" fill="#111"/><circle cx="799.6" cy="168.6" r="1.1" fill="#111"/><circle cx="992.3" cy="414" r="3.2" fill="#ff1010" stroke="#c00000" stroke-width="0.5"/></svg>
<div class="t" style="top:51px;height:7px;line-height:7px;font-size:4.7px;left:443.2px;width:240px;text-align:right;color:#3a3a3a;"><span style="transform:scaleX(0.971);transform-origin:100% 50%;">840</span></div>
<div class="t" style="top:97.84px;height:7px;line-height:7px;font-size:4.7px;left:443px;width:240px;text-align:right;color:#3a3a3a;"><span style="transform:scaleX(0.971);transform-origin:100% 50%;">720</span></div>
<div class="t" style="top:144.69px;height:7px;line-height:7px;font-size:4.7px;left:443px;width:240px;text-align:right;color:#3a3a3a;"><span style="transform:scaleX(0.971);transform-origin:100% 50%;">600</span></div>
<div class="t" style="top:191.53px;height:7px;line-height:7px;font-size:4.7px;left:443px;width:240px;text-align:right;color:#3a3a3a;"><span style="transform:scaleX(0.971);transform-origin:100% 50%;">480</span></div>
<div class="t" style="top:238.37px;height:7px;line-height:7px;font-size:4.7px;left:443px;width:240px;text-align:right;color:#3a3a3a;"><span style="transform:scaleX(0.971);transform-origin:100% 50%;">360</span></div>
<div class="t" style="top:285.21px;height:7px;line-height:7px;font-size:4.7px;left:443px;width:240px;text-align:right;color:#3a3a3a;"><span style="transform:scaleX(0.971);transform-origin:100% 50%;">240</span></div>
<div class="t" style="top:332.06px;height:7px;line-height:7px;font-size:4.7px;left:443px;width:240px;text-align:right;color:#3a3a3a;"><span style="transform:scaleX(0.971);transform-origin:100% 50%;">120</span></div>
<div class="t" style="top:51.2px;height:7px;line-height:7px;font-size:4.7px;left:1224px;color:#3a3a3a;"><span style="transform:scaleX(0.986);transform-origin:0 50%;">28.0</span></div>
<div class="t" style="top:98.04px;height:7px;line-height:7px;font-size:4.7px;left:1224px;color:#3a3a3a;"><span style="transform:scaleX(0.986);transform-origin:0 50%;">24.0</span></div>
<div class="t" style="top:144.89px;height:7px;line-height:7px;font-size:4.7px;left:1224px;color:#3a3a3a;"><span style="transform:scaleX(0.986);transform-origin:0 50%;">20.0</span></div>
<div class="t" style="top:191.73px;height:7px;line-height:7px;font-size:4.7px;left:1224px;color:#3a3a3a;"><span style="transform:scaleX(0.986);transform-origin:0 50%;">16.0</span></div>
<div class="t" style="top:238.57px;height:7px;line-height:7px;font-size:4.7px;left:1224px;color:#3a3a3a;"><span style="transform:scaleX(0.986);transform-origin:0 50%;">12.0</span></div>
<div class="t" style="top:285.41px;height:7px;line-height:7px;font-size:4.7px;left:1224px;color:#3a3a3a;"><span style="transform:scaleX(1.011);transform-origin:0 50%;">8.0</span></div>
<div class="t" style="top:332.26px;height:7px;line-height:7px;font-size:4.7px;left:1224px;color:#3a3a3a;"><span style="transform:scaleX(1.011);transform-origin:0 50%;">4.0</span></div>
<div class="t" style="top:383.3px;height:7px;line-height:7px;font-size:4.7px;left:563.2px;width:240px;text-align:center;color:#3a3a3a;"><span style="transform:scaleX(0.996);transform-origin:50% 50%;">0</span></div>
<div class="t" style="top:383.3px;height:7px;line-height:7px;font-size:4.7px;left:631.2px;width:240px;text-align:center;color:#3a3a3a;"><span style="transform:scaleX(0.996);transform-origin:50% 50%;">50</span></div>
<div class="t" style="top:383.3px;height:7px;line-height:7px;font-size:4.7px;left:698.4px;width:240px;text-align:center;color:#3a3a3a;"><span style="transform:scaleX(0.996);transform-origin:50% 50%;">100</span></div>
<div class="t" style="top:383.3px;height:7px;line-height:7px;font-size:4.7px;left:765.6px;width:240px;text-align:center;color:#3a3a3a;"><span style="transform:scaleX(0.996);transform-origin:50% 50%;">150</span></div>
<div class="t" style="top:383.3px;height:7px;line-height:7px;font-size:4.7px;left:832.8px;width:240px;text-align:center;color:#3a3a3a;"><span style="transform:scaleX(0.996);transform-origin:50% 50%;">200</span></div>
<div class="t" style="top:383.3px;height:7px;line-height:7px;font-size:4.7px;left:900px;width:240px;text-align:center;color:#3a3a3a;"><span style="transform:scaleX(0.996);transform-origin:50% 50%;">250</span></div>
<div class="t" style="top:383.3px;height:7px;line-height:7px;font-size:4.7px;left:967.2px;width:240px;text-align:center;color:#3a3a3a;"><span style="transform:scaleX(0.996);transform-origin:50% 50%;">300</span></div>
<div class="t" style="top:383.3px;height:7px;line-height:7px;font-size:4.7px;left:1034.4px;width:240px;text-align:center;color:#3a3a3a;"><span style="transform:scaleX(0.996);transform-origin:50% 50%;">350</span></div>
<div class="t" style="top:383.3px;height:7px;line-height:7px;font-size:4.7px;left:1101.6px;width:240px;text-align:center;color:#3a3a3a;"><span style="transform:scaleX(0.996);transform-origin:50% 50%;">400</span></div>
<div class="t" style="top:45.5px;height:7px;line-height:7px;font-size:4.7px;left:676px;color:#3a3a3a;"><span style="transform:scaleX(1.037);transform-origin:0 50%;">U(V)</span></div>
<div class="t" style="top:45.5px;height:7px;line-height:7px;font-size:4.7px;left:1221.6px;color:#3a3a3a;"><span style="transform:scaleX(1.081);transform-origin:0 50%;">I(mA)</span></div>
<div class="t" style="top:377.1px;height:7px;line-height:7px;font-size:4.7px;left:1223.2px;color:#3a3a3a;"><span style="transform:scaleX(0.789);transform-origin:0 50%;">T(S)</span></div>
<div class="t" style="top:156.1px;height:7px;line-height:7px;font-size:4.6px;left:796.6px;color:#333;"><span style="">A</span></div>
<div class="t" style="top:159.2px;height:6px;line-height:6px;font-size:4.2px;left:798.4px;color:#555;"><span style="">B</span></div>
<div class="t" style="top:161px;height:6px;line-height:6px;font-size:4px;left:799.6px;color:#666;"><span style="">C</span></div>
<div class="t" style="top:390.9px;height:10px;line-height:10px;font-size:7px;left:908.5px;color:#1c1c1c;font-weight:bold;"><span style="transform:scaleX(0.973);transform-origin:0 50%;">鼠标点 : 835.7V,27.856mA,18S</span></div>
<div class="grp" style="left:1244px;top:48.5px;width:65.2px;height:33.7px;border:0.8px solid #d2d2cc;"></div>
<div style="left:1247px;top:45.5px;width:20.5px;height:6.5px;background:#fff;"></div>
<div class="t" style="top:44.7px;height:8px;line-height:8px;font-size:5px;left:1248px;color:#2a2a2a;font-weight:bold;"><span style="transform:scaleX(0.924);transform-origin:0 50%;">实时参数</span></div>
<div class="t" style="top:53px;height:8px;line-height:8px;font-size:5.5px;left:1256.8px;color:#2a2a2a;"><span style="transform:scaleX(0.999);transform-origin:0 50%;">电压</span></div>
<div style="left:1272.5px;top:52.3px;width:18.5px;height:8.2px;background:#fff;border:0.8px solid;border-color:#7d7d7d #e4e4e4 #e4e4e4 #7d7d7d;box-shadow:inset 0.6px 0.6px 0 #b8b8b8;"></div>
<div class="t" style="top:52.3px;height:9px;line-height:9px;font-size:6.3px;left:1050px;width:240px;text-align:right;color:#d03030;font-family:'Liberation Serif','Noto Serif CJK SC',serif;"><span style="">333.8</span></div>
<div class="t" style="top:52.6px;height:9px;line-height:9px;font-size:6px;left:1294px;color:#2a2a2a;"><span style="transform:scaleX(0.946);transform-origin:0 50%;">V</span></div>
<div class="t" style="top:63px;height:8px;line-height:8px;font-size:5.5px;left:1256.8px;color:#2a2a2a;"><span style="transform:scaleX(0.999);transform-origin:0 50%;">电流</span></div>
<div style="left:1272.5px;top:62.3px;width:18.5px;height:8.2px;background:#fff;border:0.8px solid;border-color:#7d7d7d #e4e4e4 #e4e4e4 #7d7d7d;box-shadow:inset 0.6px 0.6px 0 #b8b8b8;"></div>
<div class="t" style="top:62.3px;height:9px;line-height:9px;font-size:6.3px;left:1050px;width:240px;text-align:right;color:#3030c0;font-family:'Liberation Serif','Noto Serif CJK SC',serif;"><span style="">20</span></div>
<div class="t" style="top:62.6px;height:9px;line-height:9px;font-size:6px;left:1294px;color:#2a2a2a;"><span style="transform:scaleX(0.844);transform-origin:0 50%;">mA</span></div>
<div class="t" style="top:73px;height:8px;line-height:8px;font-size:5.5px;left:1256.8px;color:#2a2a2a;"><span style="transform:scaleX(0.999);transform-origin:0 50%;">时间</span></div>
<div style="left:1272.5px;top:72.3px;width:18.5px;height:8.2px;background:#fff;border:0.8px solid;border-color:#7d7d7d #e4e4e4 #e4e4e4 #7d7d7d;box-shadow:inset 0.6px 0.6px 0 #b8b8b8;"></div>
<div class="t" style="top:72.3px;height:9px;line-height:9px;font-size:6.3px;left:1050px;width:240px;text-align:right;color:#c030c0;font-family:'Liberation Serif','Noto Serif CJK SC',serif;"><span style="">111</span></div>
<div class="t" style="top:72.6px;height:9px;line-height:9px;font-size:6px;left:1294px;color:#2a2a2a;"><span style="transform:scaleX(0.797);transform-origin:0 50%;">S</span></div>
<div class="grp" style="left:1244px;top:85.7px;width:65.2px;height:190.5px;border:0.8px solid #d2d2cc;"></div>
<div style="left:1247px;top:82.7px;width:15.5px;height:6.5px;background:#fff;"></div>
<div class="t" style="top:81.9px;height:8px;line-height:8px;font-size:5px;left:1248px;color:#2a2a2a;font-weight:bold;"><span style="transform:scaleX(0.899);transform-origin:0 50%;">电解液</span></div>
<div class="t" style="top:90px;height:8px;line-height:8px;font-size:5.5px;left:1251px;color:#2a2a2a;"><span style="transform:scaleX(0.954);transform-origin:0 50%;">测试电压</span></div>
<div style="left:1276px;top:89.4px;width:17.9px;height:7.8px;background:#fff;border:0.8px solid;border-color:#7d7d7d #e4e4e4 #e4e4e4 #7d7d7d;box-shadow:inset 0.6px 0.6px 0 #b8b8b8;"></div>
<div class="t" style="top:89.8px;height:8px;line-height:8px;font-size:5.6px;left:1053px;width:240px;text-align:right;color:#2a2a2a;font-family:'Liberation Serif','Noto Serif CJK SC',serif;"><span style="">600</span></div>
<div class="t" style="top:90px;height:8px;line-height:8px;font-size:5.4px;left:1296.5px;color:#2a2a2a;font-family:'Liberation Serif','Noto Serif CJK SC',serif;"><span style="">V</span></div>
<div class="t" style="top:100px;height:8px;line-height:8px;font-size:5.5px;left:1251px;color:#2a2a2a;"><span style="transform:scaleX(0.954);transform-origin:0 50%;">升压电流</span></div>
<div style="left:1276px;top:99.4px;width:17.9px;height:7.8px;background:#fff;border:0.8px solid;border-color:#7d7d7d #e4e4e4 #e4e4e4 #7d7d7d;box-shadow:inset 0.6px 0.6px 0 #b8b8b8;"></div>
<div class="t" style="top:99.8px;height:8px;line-height:8px;font-size:5.6px;left:1053px;width:240px;text-align:right;color:#2a2a2a;font-family:'Liberation Serif','Noto Serif CJK SC',serif;"><span style="">20</span></div>
<div class="t" style="top:100px;height:8px;line-height:8px;font-size:5.4px;left:1295.2px;color:#2a2a2a;font-family:'Liberation Serif','Noto Serif CJK SC',serif;"><span style="">mA</span></div>
<div class="t" style="top:110px;height:8px;line-height:8px;font-size:5.5px;left:1247.8px;color:#2a2a2a;"><span style="transform:scaleX(0.989);transform-origin:0 50%;">分析电压A</span></div>
<div style="left:1276px;top:109.4px;width:17.9px;height:7.8px;background:#fff;border:0.8px solid;border-color:#7d7d7d #e4e4e4 #e4e4e4 #7d7d7d;box-shadow:inset 0.6px 0.6px 0 #b8b8b8;"></div>
<div class="t" style="top:109.8px;height:8px;line-height:8px;font-size:5.6px;left:1053px;width:240px;text-align:right;color:#2a2a2a;font-family:'Liberation Serif','Noto Serif CJK SC',serif;"><span style="">2</span></div>
<div class="t" style="top:110px;height:8px;line-height:8px;font-size:5.4px;left:1296.5px;color:#2a2a2a;font-family:'Liberation Serif','Noto Serif CJK SC',serif;"><span style="">V</span></div>
<div class="t" style="top:120px;height:8px;line-height:8px;font-size:5.5px;left:1247.8px;color:#2a2a2a;"><span style="transform:scaleX(0.989);transform-origin:0 50%;">分析电压B</span></div>
<div style="left:1276px;top:119.4px;width:17.9px;height:7.8px;background:#fff;border:0.8px solid;border-color:#7d7d7d #e4e4e4 #e4e4e4 #7d7d7d;box-shadow:inset 0.6px 0.6px 0 #b8b8b8;"></div>
<div class="t" style="top:119.8px;height:8px;line-height:8px;font-size:5.6px;left:1053px;width:240px;text-align:right;color:#2a2a2a;font-family:'Liberation Serif','Noto Serif CJK SC',serif;"><span style="">3</span></div>
<div class="t" style="top:120px;height:8px;line-height:8px;font-size:5.4px;left:1296.5px;color:#2a2a2a;font-family:'Liberation Serif','Noto Serif CJK SC',serif;"><span style="">V</span></div>
<div class="t" style="top:130.4px;height:8px;line-height:8px;font-size:5.5px;left:1247.8px;color:#2a2a2a;"><span style="transform:scaleX(0.978);transform-origin:0 50%;">分析电压C</span></div>
<div style="left:1276px;top:129.8px;width:17.9px;height:7.8px;background:#fff;border:0.8px solid;border-color:#7d7d7d #e4e4e4 #e4e4e4 #7d7d7d;box-shadow:inset 0.6px 0.6px 0 #b8b8b8;"></div>
<div class="t" style="top:130.2px;height:8px;line-height:8px;font-size:5.6px;left:1053px;width:240px;text-align:right;color:#2a2a2a;font-family:'Liberation Serif','Noto Serif CJK SC',serif;"><span style="">4</span></div>
<div class="t" style="top:130.4px;height:8px;line-height:8px;font-size:5.4px;left:1296.5px;color:#2a2a2a;font-family:'Liberation Serif','Noto Serif CJK SC',serif;"><span style="">V</span></div>
<div class="t" style="top:140.7px;height:8px;line-height:8px;font-size:5.5px;left:1251px;color:#2a2a2a;"><span style="transform:scaleX(0.954);transform-origin:0 50%;">预闪电压</span></div>
<div style="left:1276px;top:140.1px;width:17.9px;height:7.8px;background:#fff;border:0.8px solid;border-color:#7d7d7d #e4e4e4 #e4e4e4 #7d7d7d;box-shadow:inset 0.6px 0.6px 0 #b8b8b8;"></div>
<div class="t" style="top:140.5px;height:8px;line-height:8px;font-size:5.6px;left:1053px;width:240px;text-align:right;color:#2a2a2a;font-family:'Liberation Serif','Noto Serif CJK SC',serif;"><span style="">500</span></div>
<div class="t" style="top:140.7px;height:8px;line-height:8px;font-size:5.4px;left:1296.5px;color:#2a2a2a;font-family:'Liberation Serif','Noto Serif CJK SC',serif;"><span style="">V</span></div>
<div class="t" style="top:151px;height:8px;line-height:8px;font-size:5.5px;left:1251px;color:#2a2a2a;"><span style="transform:scaleX(0.954);transform-origin:0 50%;">延时时间</span></div>
<div style="left:1276px;top:150.4px;width:17.9px;height:7.8px;background:#fff;border:0.8px solid;border-color:#7d7d7d #e4e4e4 #e4e4e4 #7d7d7d;box-shadow:inset 0.6px 0.6px 0 #b8b8b8;"></div>
<div class="t" style="top:150.8px;height:8px;line-height:8px;font-size:5.6px;left:1053px;width:240px;text-align:right;color:#2a2a2a;font-family:'Liberation Serif','Noto Serif CJK SC',serif;"><span style="">30</span></div>
<div class="t" style="top:151px;height:8px;line-height:8px;font-size:5.4px;left:1296.5px;color:#2a2a2a;"><span style="">S</span></div>
<div class="grp" style="left:1247px;top:163.8px;width:56.2px;height:67.5px;border:0.8px solid #d2d2cc;"></div>
<div style="left:1250px;top:160.8px;width:20.6px;height:6.5px;background:#fff;"></div>
<div class="t" style="top:160px;height:8px;line-height:8px;font-size:5px;left:1251px;color:#2a2a2a;font-weight:bold;"><span style="transform:scaleX(0.929);transform-origin:0 50%;">判定结果</span></div>
<div class="t" style="top:168.3px;height:8px;line-height:8px;font-size:5.5px;left:1251px;color:#2a2a2a;"><span style="transform:scaleX(0.991);transform-origin:0 50%;">A点闪火</span></div>
<div style="left:1276px;top:167.7px;width:17.9px;height:7.8px;background:#e4e4e4;border:0.8px solid;border-color:#7d7d7d #e4e4e4 #e4e4e4 #7d7d7d;box-shadow:inset 0.6px 0.6px 0 #b8b8b8;"></div>
<div class="t" style="top:168.3px;height:8px;line-height:8px;font-size:5.4px;left:1053px;width:240px;text-align:right;color:#222;font-weight:bold;"><span style="">81</span></div>
<div class="t" style="top:168.3px;height:8px;line-height:8px;font-size:5.4px;left:1296.5px;color:#2a2a2a;"><span style="">S</span></div>
<div class="t" style="top:178px;height:8px;line-height:8px;font-size:5.5px;left:1251px;color:#2a2a2a;"><span style="transform:scaleX(0.991);transform-origin:0 50%;">A点电压</span></div>
<div style="left:1276px;top:177.4px;width:17.9px;height:7.8px;background:#e4e4e4;border:0.8px solid;border-color:#7d7d7d #e4e4e4 #e4e4e4 #7d7d7d;box-shadow:inset 0.6px 0.6px 0 #b8b8b8;"></div>
<div class="t" style="top:178px;height:8px;line-height:8px;font-size:5.4px;left:1053px;width:240px;text-align:right;color:#222;font-weight:bold;"><span style="">550.9</span></div>
<div class="t" style="top:178px;height:8px;line-height:8px;font-size:5.4px;left:1296.5px;color:#2a2a2a;font-family:'Liberation Serif','Noto Serif CJK SC',serif;"><span style="">V</span></div>
<div class="t" style="top:188.3px;height:8px;line-height:8px;font-size:5.5px;left:1251px;color:#2a2a2a;"><span style="transform:scaleX(0.991);transform-origin:0 50%;">B点闪火</span></div>
<div style="left:1276px;top:187.7px;width:17.9px;height:7.8px;background:#e4e4e4;border:0.8px solid;border-color:#7d7d7d #e4e4e4 #e4e4e4 #7d7d7d;box-shadow:inset 0.6px 0.6px 0 #b8b8b8;"></div>
<div class="t" style="top:188.3px;height:8px;line-height:8px;font-size:5.4px;left:1053px;width:240px;text-align:right;color:#222;font-weight:bold;"><span style="">82</span></div>
<div class="t" style="top:188.3px;height:8px;line-height:8px;font-size:5.4px;left:1296.5px;color:#2a2a2a;"><span style="">S</span></div>
<div class="t" style="top:198.4px;height:8px;line-height:8px;font-size:5.5px;left:1251px;color:#2a2a2a;"><span style="transform:scaleX(0.991);transform-origin:0 50%;">B点电压</span></div>
<div style="left:1276px;top:197.8px;width:17.9px;height:7.8px;background:#e4e4e4;border:0.8px solid;border-color:#7d7d7d #e4e4e4 #e4e4e4 #7d7d7d;box-shadow:inset 0.6px 0.6px 0 #b8b8b8;"></div>
<div class="t" style="top:198.4px;height:8px;line-height:8px;font-size:5.4px;left:1053px;width:240px;text-align:right;color:#222;font-weight:bold;"><span style="">555.7</span></div>
<div class="t" style="top:198.4px;height:8px;line-height:8px;font-size:5.4px;left:1296.5px;color:#2a2a2a;font-family:'Liberation Serif','Noto Serif CJK SC',serif;"><span style="">V</span></div>
<div class="t" style="top:208.5px;height:8px;line-height:8px;font-size:5.5px;left:1251px;color:#2a2a2a;"><span style="transform:scaleX(0.976);transform-origin:0 50%;">C点闪火</span></div>
<div style="left:1276px;top:207.9px;width:17.9px;height:7.8px;background:#e4e4e4;border:0.8px solid;border-color:#7d7d7d #e4e4e4 #e4e4e4 #7d7d7d;box-shadow:inset 0.6px 0.6px 0 #b8b8b8;"></div>
<div class="t" style="top:208.5px;height:8px;line-height:8px;font-size:5.4px;left:1053px;width:240px;text-align:right;color:#222;font-weight:bold;"><span style="">84</span></div>
<div class="t" style="top:208.5px;height:8px;line-height:8px;font-size:5.4px;left:1296.5px;color:#2a2a2a;"><span style="">S</span></div>
<div class="t" style="top:218.6px;height:8px;line-height:8px;font-size:5.5px;left:1251px;color:#2a2a2a;"><span style="transform:scaleX(0.976);transform-origin:0 50%;">C点电压</span></div>
<div style="left:1276px;top:218px;width:17.9px;height:7.8px;background:#e4e4e4;border:0.8px solid;border-color:#7d7d7d #e4e4e4 #e4e4e4 #7d7d7d;box-shadow:inset 0.6px 0.6px 0 #b8b8b8;"></div>
<div class="t" style="top:218.6px;height:8px;line-height:8px;font-size:5.4px;left:1053px;width:240px;text-align:right;color:#222;font-weight:bold;"><span style="">549.5</span></div>
<div class="t" style="top:218.6px;height:8px;line-height:8px;font-size:5.4px;left:1296.5px;color:#2a2a2a;font-family:'Liberation Serif','Noto Serif CJK SC',serif;"><span style="">V</span></div>
<div class="t" style="top:236px;height:8px;line-height:8px;font-size:5.5px;left:1247.5px;color:#2a2a2a;"><span style="transform:scaleX(0.977);transform-origin:0 50%;">电解规格</span></div>
<div style="left:1270px;top:235.1px;width:32.8px;height:8.5px;background:#fff;border:0.8px solid;border-color:#7d7d7d #e4e4e4 #e4e4e4 #7d7d7d;box-shadow:inset 0.6px 0.6px 0 #b8b8b8;"></div>
<div class="t" style="top:236px;height:8px;line-height:8px;font-size:5.4px;left:1061.8px;width:240px;text-align:right;color:#222;"><span style="">2</span></div>
<div class="t" style="top:246.2px;height:8px;line-height:8px;font-size:5.5px;left:1247.5px;color:#2a2a2a;"><span style="transform:scaleX(0.977);transform-origin:0 50%;">测试时间</span></div>
<div style="left:1270px;top:245.3px;width:32.8px;height:8.5px;background:#fff;border:0.8px solid;border-color:#7d7d7d #e4e4e4 #e4e4e4 #7d7d7d;box-shadow:inset 0.6px 0.6px 0 #b8b8b8;"></div>
<div class="t" style="top:246.2px;height:8px;line-height:8px;font-size:5.4px;left:1061.8px;width:240px;text-align:right;color:#222;"><span style="">2014-4-9</span></div>
<div class="t" style="top:256.3px;height:8px;line-height:8px;font-size:5.5px;left:1247.5px;color:#2a2a2a;"><span style="transform:scaleX(0.977);transform-origin:0 50%;">测试人员</span></div>
<div style="left:1270px;top:255.4px;width:32.8px;height:8.5px;background:#fff;border:0.8px solid;border-color:#7d7d7d #e4e4e4 #e4e4e4 #7d7d7d;box-shadow:inset 0.6px 0.6px 0 #b8b8b8;"></div>
<div class="t" style="top:256.3px;height:8px;line-height:8px;font-size:5.4px;left:1061.8px;width:240px;text-align:right;color:#222;"><span style="">邱金清</span></div>
<div style="left:659.4px;top:419.6px;width:647.2px;height:10.8px;background:#ece9d8;border-top:1px solid #f8f7f1;"></div>
<div style="left:885.5px;top:421px;width:1px;height:9px;background:#c8c4b2;"></div>
<div style="left:886.5px;top:421px;width:0.8px;height:9px;background:#fbfaf5;"></div>
<div style="left:1096.4px;top:421px;width:1px;height:9px;background:#c8c4b2;"></div>
<div style="left:1097.4px;top:421px;width:0.8px;height:9px;background:#fbfaf5;"></div>
<div class="t" style="top:421.5px;height:7px;line-height:7px;font-size:4.9px;left:662.5px;color:#111;font-weight:bold;"><span style="transform:scaleX(0.940);transform-origin:0 50%;">扬州宝联电子</span></div>
<div class="t" style="top:421.7px;height:7px;line-height:7px;font-size:4.9px;left:978.8px;color:#111;font-weight:bold;"><span style="transform:scaleX(0.969);transform-origin:0 50%;">TV仪未连接</span></div>
<div class="t" style="top:421.2px;height:8px;line-height:8px;font-size:5px;left:1248px;color:#111;font-weight:bold;"><span style="transform:scaleX(0.976);transform-origin:0 50%;">2014-10-29 上午 10:18:14</span></div>
<div style="left:659.4px;top:42.2px;width:1.2px;height:386.6px;background:#a6a6a6;"></div>
<div style="left:659.4px;top:430.3px;width:655.2px;height:2.7px;background:linear-gradient(#2a68dc 45%,#6f9ff0);"></div>
<div style="left:659.4px;top:430.3px;width:36.2px;height:2.7px;background:linear-gradient(#37963a 45%,#9fd49a);"></div>
<div style="left:1257.8px;top:430.3px;width:56.8px;height:2.7px;background:linear-gradient(#2a98ee 45%,#8fcaf6);"></div>
</section>
</div></body></html>
